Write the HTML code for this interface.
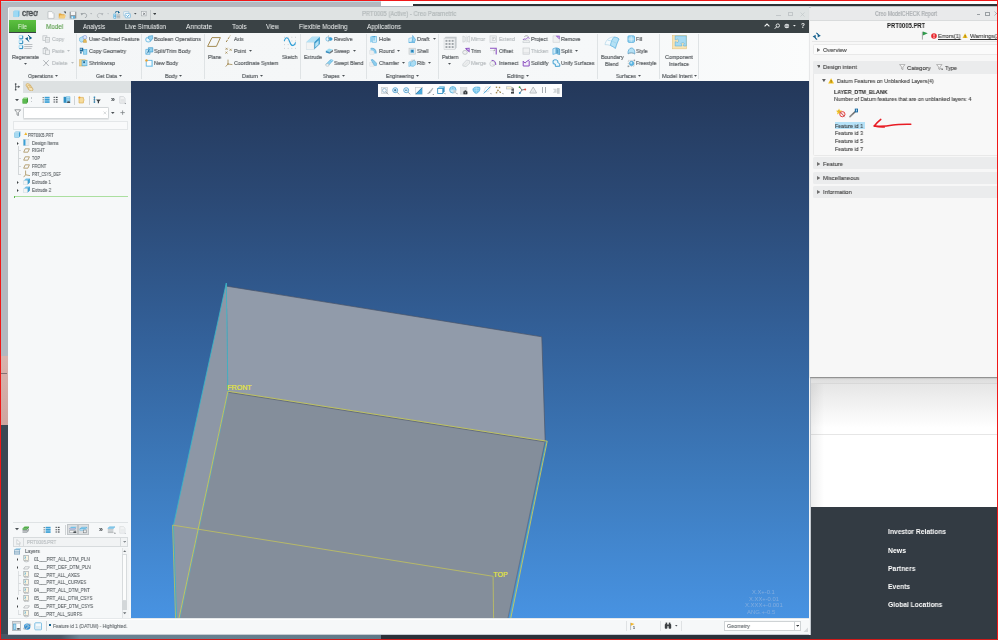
<!DOCTYPE html>
<html><head><meta charset="utf-8"><title>Creo Parametric</title>
<style>
html,body{margin:0;padding:0;}
body{width:998px;height:640px;overflow:hidden;position:relative;background:#b3b8bf;font-family:"Liberation Sans",sans-serif;}
#root{position:absolute;left:0;top:0;width:998px;height:640px;overflow:hidden;}
#root div,#root span,#root svg{position:absolute;white-space:nowrap;}
#root span{display:block;will-change:transform;}
</style></head><body><div id="root">
<div style="left:0px;top:0px;width:998px;height:640px;background:#b3b8bf;"></div>
<div style="left:1px;top:356px;width:8px;height:70px;background:linear-gradient(#d8b3ad,#cfa59f);"></div>
<div style="left:1px;top:425px;width:8px;height:215px;background:#3b4853;"></div>
<div style="left:0px;top:634px;width:811px;height:5px;background:#2a313a;"></div>
<div style="left:0px;top:634px;width:381px;height:5px;background:linear-gradient(90deg,#485664 0%,#4a5866 16%,#6a8292 21%,#66808f 60%,#5f7887 100%);"></div>
<div style="left:1.2px;top:1px;width:380px;height:0.6px;background:#bcdde8;"></div>
<div style="left:1.4px;top:372.9px;width:5.2px;height:1.1px;background:rgba(70,60,70,.55);"></div>
<div style="left:381px;top:1px;width:617px;height:3px;background:#ffffff;"></div>
<div style="left:381px;top:1px;width:32px;height:5px;background:#ffffff;"></div>
<div style="left:413px;top:4px;width:585px;height:2px;background:#2c3336;"></div>
<div style="left:413px;top:6px;width:585px;height:1px;background:#c9cdd0;"></div>
<div style="left:810px;top:377px;width:188px;height:130px;background:#ffffff;"></div>
<div style="left:810px;top:377px;width:188px;height:7px;background:linear-gradient(#c4c4c4,#dedede 25%,#e2e2e2 85%,#cfcfcf);"></div>
<div style="left:810px;top:384px;width:188px;height:44px;background:linear-gradient(#e6e6e6,#ffffff);"></div>
<div style="left:810px;top:434px;width:188px;height:0.8px;background:#e6e6e6;"></div>
<div style="left:810px;top:384px;width:14px;height:123px;background:linear-gradient(90deg,rgba(0,0,0,.07),rgba(0,0,0,0));"></div>
<div style="left:810px;top:507px;width:188px;height:133px;background:#333b43;"></div>
<span style="left:888.40px;top:527.30px;font-size:6.9px;line-height:9px;color:#ffffff;transform:scaleX(0.9713);transform-origin:0 50%;font-weight:bold;">Investor Relations</span>
<span style="left:888.40px;top:545.50px;font-size:6.9px;line-height:9px;color:#ffffff;transform:scaleX(0.9764);transform-origin:0 50%;font-weight:bold;">News</span>
<span style="left:888.40px;top:563.70px;font-size:6.9px;line-height:9px;color:#ffffff;transform:scaleX(0.9786);transform-origin:0 50%;font-weight:bold;">Partners</span>
<span style="left:888.40px;top:581.90px;font-size:6.9px;line-height:9px;color:#ffffff;transform:scaleX(0.9767);transform-origin:0 50%;font-weight:bold;">Events</span>
<span style="left:888.40px;top:600.10px;font-size:6.9px;line-height:9px;color:#ffffff;transform:scaleX(0.9719);transform-origin:0 50%;font-weight:bold;">Global Locations</span>
<div style="left:7.6px;top:6.8px;width:803px;height:627.9px;background:#c6cbd2;"></div>
<div style="left:8.4px;top:7.6px;width:801.8px;height:626.6px;background:#f5f7f8;"></div>
<div style="left:9px;top:7px;width:800px;height:13px;background:#dfe3e3;"></div>
<div style="left:9px;top:20.1px;width:800px;height:12.5px;background:#3a4245;"></div>
<div style="left:9px;top:20.1px;width:27px;height:12.4px;background:linear-gradient(#5cc040,#43a52f);"></div>
<div style="left:36px;top:20.1px;width:37.5px;height:13px;background:#f5f7f8;"></div>
<span style="left:18.00px;top:21.80px;font-size:6.8px;line-height:9px;color:#eaf7e4;transform:scaleX(0.8031);transform-origin:0 50%;">File</span>
<span style="left:45.80px;top:21.80px;font-size:6.8px;line-height:9px;color:#559a45;transform:scaleX(0.9287);transform-origin:0 50%;-webkit-text-stroke:0.1px;">Model</span>
<span style="left:83.00px;top:21.80px;font-size:6.8px;line-height:9px;color:#f2f4f4;transform:scaleX(0.8688);transform-origin:0 50%;">Analysis</span>
<span style="left:125.00px;top:21.80px;font-size:6.8px;line-height:9px;color:#f2f4f4;transform:scaleX(0.8891);transform-origin:0 50%;">Live Simulation</span>
<span style="left:186.00px;top:21.80px;font-size:6.8px;line-height:9px;color:#f2f4f4;transform:scaleX(0.9550);transform-origin:0 50%;">Annotate</span>
<span style="left:232.00px;top:21.80px;font-size:6.8px;line-height:9px;color:#f2f4f4;transform:scaleX(0.9134);transform-origin:0 50%;">Tools</span>
<span style="left:266.00px;top:21.80px;font-size:6.8px;line-height:9px;color:#f2f4f4;transform:scaleX(0.8894);transform-origin:0 50%;">View</span>
<span style="left:299.00px;top:21.80px;font-size:6.8px;line-height:9px;color:#f2f4f4;transform:scaleX(0.9165);transform-origin:0 50%;">Flexible Modeling</span>
<span style="left:367.00px;top:21.80px;font-size:6.8px;line-height:9px;color:#f2f4f4;transform:scaleX(0.9273);transform-origin:0 50%;">Applications</span>
<span style="left:361.50px;top:9.80px;font-size:6.4px;line-height:8px;color:#b4babb;transform:scaleX(0.9204);transform-origin:0 50%;-webkit-text-stroke:0.22px;">PRT0005 (Active) - Creo Parametric</span>
<div style="left:9px;top:33px;width:800px;height:48px;background:linear-gradient(90deg,#f4f6f7 0%,#f6f8f9 75%,#fbfcfc 100%);"></div>
<div style="left:75.5px;top:34px;width:1px;height:45px;background:#dfe3e5;"></div>
<div style="left:141.0px;top:34px;width:1px;height:45px;background:#dfe3e5;"></div>
<div style="left:203.8px;top:34px;width:1px;height:45px;background:#dfe3e5;"></div>
<div style="left:300.0px;top:34px;width:1px;height:45px;background:#dfe3e5;"></div>
<div style="left:365.8px;top:34px;width:1px;height:45px;background:#dfe3e5;"></div>
<div style="left:438.0px;top:34px;width:1px;height:45px;background:#dfe3e5;"></div>
<div style="left:596.9px;top:34px;width:1px;height:45px;background:#dfe3e5;"></div>
<div style="left:658.8px;top:34px;width:1px;height:45px;background:#dfe3e5;"></div>
<div style="left:698.0px;top:34px;width:1px;height:45px;background:#dfe3e5;"></div>
<div style="left:131px;top:81px;width:678px;height:538px;background:linear-gradient(#24385a 0%,#2b4975 22%,#33619a 48%,#3d7bbd 74%,#4893e2 100%);"></div>
<div style="left:9px;top:81px;width:122px;height:538px;background:#f6f8f9;"></div>
<div style="left:9px;top:81px;width:122px;height:11.5px;background:#dde1e2;"></div>
<div style="left:9px;top:81px;width:14px;height:12px;background:#f6f8f9;"></div>
<div style="left:9px;top:619px;width:800px;height:15.4px;background:#f6f8f9;"></div>
<div style="left:9px;top:618.6px;width:800px;height:0.8px;background:#ffffff;"></div>
<div style="left:808.8px;top:81px;width:1.5px;height:553.6px;background:#f4f6f7;"></div>
<div style="left:810.2px;top:377px;width:0.5px;height:257.6px;background:#c3c8ce;"></div>
<div style="left:810px;top:7px;width:191px;height:370px;background:#f7f7f7;box-shadow:0 0.5px 1.5px rgba(0,0,0,.35), -0.6px 0 0 rgba(255,255,255,.55);border-radius:2.5px 0 0 0;"></div>
<div style="left:810px;top:7px;width:191px;height:12.6px;background:#e9eaeb;border-radius:2.5px 0 0 0;border-bottom:0.6px solid #d9dbdc;"></div>
<div style="left:0px;top:0px;width:998px;height:1px;background:#f01818;"></div>
<div style="left:0px;top:0px;width:1px;height:640px;background:#f01818;"></div>
<div style="left:997px;top:0px;width:1px;height:640px;background:#f01818;"></div>
<div style="left:0px;top:639px;width:998px;height:1px;background:#c81c1c;"></div>
<svg style="left:131px;top:81px" width="678" height="538" viewBox="0 0 678 538"><polygon points="95.8,205.2 410.8,255.8 414.2,359.8 96.9,310.2" fill="#919baa"/><polygon points="95.3,202.0 95.8,205.2 96.9,310.2 47.8,538.0 45.6,538.0 42.4,444.4" fill="#8d97a6"/><polygon points="96.9,310.2 414.2,359.8 376.8,538.0 47.8,538.0" fill="#848e9b"/><polyline points="95.8,205.2 410.8,255.8 414.2,359.8" fill="none" stroke="#4a5568" stroke-width="0.7"/><polyline points="96.9,311.2 413.7,360.8" fill="none" stroke="#5d6675" stroke-width="0.8"/><polyline points="414.2,359.8 376.8,538.0" fill="none" stroke="#5d6675" stroke-width="0.6"/><polyline points="45.6,538.0 42.4,444.4 95.3,202.0 96.9,310.2" fill="none" stroke="#35b9c9" stroke-width="0.8"/><polyline points="415.3,360.4 378.7,538.0" fill="none" stroke="#4fb4c8" stroke-width="0.8"/><polyline points="97.6,310.2 48.7,538.0" fill="none" stroke="#4fb4c8" stroke-width="0.6"/><polyline points="47.8,538.0 96.9,310.2 416.2,360.2 379.6,538.0" fill="none" stroke="#c9c95a" stroke-width="0.9"/><polyline points="44.6,538.0 41.6,444.1 362.1,495.3 362.6,538.0" fill="none" stroke="#c3c35c" stroke-width="0.8"/><text x="96.19999999999999" y="308.7" font-size="7.1" fill="#e6e63a" stroke="#e6e63a" stroke-width="0.2" font-family="Liberation Sans, sans-serif">FRONT</text><text x="362.3" y="496.1" font-size="7" fill="#e6e63a" stroke="#e6e63a" stroke-width="0.2" font-family="Liberation Sans, sans-serif">TOP</text></svg>
<span style="left:752.10px;top:589.30px;font-size:5.7px;line-height:7px;color:#82addf;transform:scaleX(1.0207);transform-origin:0 50%;">X.X+-0.1</span>
<span style="left:748.80px;top:596.10px;font-size:5.7px;line-height:7px;color:#82addf;transform:scaleX(1.0235);transform-origin:0 50%;">X.XX+-0.01</span>
<span style="left:744.90px;top:602.40px;font-size:5.7px;line-height:7px;color:#82addf;transform:scaleX(1.0418);transform-origin:0 50%;">X.XXX+-0.001</span>
<span style="left:746.90px;top:609.00px;font-size:5.7px;line-height:7px;color:#82addf;transform:scaleX(1.0485);transform-origin:0 50%;">ANG.+-0.5</span>
<span style="left:12.00px;top:53.90px;font-size:5.8px;line-height:7px;color:#54595d;transform:scaleX(0.8907);transform-origin:0 50%;-webkit-text-stroke:0.16px;">Regenerate</span>
<svg style="left:24.00px;top:62.95px" width="3.0" height="1.9" viewBox="0 0 3.0 1.9"><polygon points="0,0 3.0,0 1.5,1.7" fill="#4b5155"/></svg>
<span style="left:52.00px;top:35.50px;font-size:5.8px;line-height:7px;color:#b7bcbf;transform:scaleX(0.8862);transform-origin:0 50%;-webkit-text-stroke:0.16px;">Copy</span>
<span style="left:52.00px;top:47.70px;font-size:5.8px;line-height:7px;color:#b7bcbf;transform:scaleX(0.8428);transform-origin:0 50%;-webkit-text-stroke:0.16px;">Paste</span>
<svg style="left:67.00px;top:50.15px" width="3.0" height="1.9" viewBox="0 0 3.0 1.9"><polygon points="0,0 3.0,0 1.5,1.7" fill="#b7bcbf"/></svg>
<span style="left:52.00px;top:59.90px;font-size:5.8px;line-height:7px;color:#b7bcbf;transform:scaleX(0.9245);transform-origin:0 50%;-webkit-text-stroke:0.16px;">Delete</span>
<svg style="left:70.50px;top:62.35px" width="3.0" height="1.9" viewBox="0 0 3.0 1.9"><polygon points="0,0 3.0,0 1.5,1.7" fill="#b7bcbf"/></svg>
<span style="left:27.50px;top:72.80px;font-size:5.8px;line-height:7px;color:#54595d;transform:scaleX(0.8812);transform-origin:0 50%;-webkit-text-stroke:0.16px;">Operations</span>
<svg style="left:55.00px;top:75.25px" width="3.0" height="1.9" viewBox="0 0 3.0 1.9"><polygon points="0,0 3.0,0 1.5,1.7" fill="#4b5155"/></svg>
<span style="left:88.50px;top:35.50px;font-size:5.8px;line-height:7px;color:#54595d;transform:scaleX(0.9055);transform-origin:0 50%;-webkit-text-stroke:0.16px;">User-Defined Feature</span>
<span style="left:88.50px;top:47.70px;font-size:5.8px;line-height:7px;color:#54595d;transform:scaleX(0.9110);transform-origin:0 50%;-webkit-text-stroke:0.16px;">Copy Geometry</span>
<span style="left:88.50px;top:59.90px;font-size:5.8px;line-height:7px;color:#54595d;transform:scaleX(0.8962);transform-origin:0 50%;-webkit-text-stroke:0.16px;">Shrinkwrap</span>
<span style="left:96.00px;top:72.80px;font-size:5.8px;line-height:7px;color:#54595d;transform:scaleX(0.9047);transform-origin:0 50%;-webkit-text-stroke:0.16px;">Get Data</span>
<svg style="left:119.00px;top:75.25px" width="3.0" height="1.9" viewBox="0 0 3.0 1.9"><polygon points="0,0 3.0,0 1.5,1.7" fill="#4b5155"/></svg>
<span style="left:154.00px;top:35.50px;font-size:5.8px;line-height:7px;color:#54595d;transform:scaleX(0.9167);transform-origin:0 50%;-webkit-text-stroke:0.16px;">Boolean Operations</span>
<span style="left:154.00px;top:47.70px;font-size:5.8px;line-height:7px;color:#54595d;transform:scaleX(0.9334);transform-origin:0 50%;-webkit-text-stroke:0.16px;">Split/Trim Body</span>
<span style="left:154.00px;top:59.90px;font-size:5.8px;line-height:7px;color:#54595d;transform:scaleX(0.9079);transform-origin:0 50%;-webkit-text-stroke:0.16px;">New Body</span>
<span style="left:164.50px;top:72.80px;font-size:5.8px;line-height:7px;color:#54595d;transform:scaleX(0.9455);transform-origin:0 50%;-webkit-text-stroke:0.16px;">Body</span>
<svg style="left:178.50px;top:75.25px" width="3.0" height="1.9" viewBox="0 0 3.0 1.9"><polygon points="0,0 3.0,0 1.5,1.7" fill="#4b5155"/></svg>
<span style="left:207.80px;top:53.90px;font-size:5.8px;line-height:7px;color:#54595d;transform:scaleX(0.8898);transform-origin:0 50%;-webkit-text-stroke:0.16px;">Plane</span>
<span style="left:234.00px;top:35.50px;font-size:5.8px;line-height:7px;color:#54595d;transform:scaleX(0.8670);transform-origin:0 50%;-webkit-text-stroke:0.16px;">Axis</span>
<span style="left:234.00px;top:47.70px;font-size:5.8px;line-height:7px;color:#54595d;transform:scaleX(0.9077);transform-origin:0 50%;-webkit-text-stroke:0.16px;">Point</span>
<svg style="left:249.00px;top:50.15px" width="3.0" height="1.9" viewBox="0 0 3.0 1.9"><polygon points="0,0 3.0,0 1.5,1.7" fill="#4b5155"/></svg>
<span style="left:234.00px;top:59.90px;font-size:5.8px;line-height:7px;color:#54595d;transform:scaleX(0.9022);transform-origin:0 50%;-webkit-text-stroke:0.16px;">Coordinate System</span>
<span style="left:282.00px;top:53.90px;font-size:5.8px;line-height:7px;color:#54595d;transform:scaleX(0.8741);transform-origin:0 50%;-webkit-text-stroke:0.16px;">Sketch</span>
<span style="left:242.00px;top:72.80px;font-size:5.8px;line-height:7px;color:#54595d;transform:scaleX(0.9366);transform-origin:0 50%;-webkit-text-stroke:0.16px;">Datum</span>
<svg style="left:259.80px;top:75.25px" width="3.0" height="1.9" viewBox="0 0 3.0 1.9"><polygon points="0,0 3.0,0 1.5,1.7" fill="#4b5155"/></svg>
<span style="left:303.50px;top:53.90px;font-size:5.8px;line-height:7px;color:#54595d;transform:scaleX(0.9005);transform-origin:0 50%;-webkit-text-stroke:0.16px;">Extrude</span>
<span style="left:334.00px;top:35.50px;font-size:5.8px;line-height:7px;color:#54595d;transform:scaleX(0.8829);transform-origin:0 50%;-webkit-text-stroke:0.16px;">Revolve</span>
<span style="left:334.00px;top:47.70px;font-size:5.8px;line-height:7px;color:#54595d;transform:scaleX(0.8740);transform-origin:0 50%;-webkit-text-stroke:0.16px;">Sweep</span>
<svg style="left:352.80px;top:50.15px" width="3.0" height="1.9" viewBox="0 0 3.0 1.9"><polygon points="0,0 3.0,0 1.5,1.7" fill="#4b5155"/></svg>
<span style="left:334.00px;top:59.90px;font-size:5.8px;line-height:7px;color:#54595d;transform:scaleX(0.9058);transform-origin:0 50%;-webkit-text-stroke:0.16px;">Swept Blend</span>
<span style="left:323.00px;top:72.80px;font-size:5.8px;line-height:7px;color:#54595d;transform:scaleX(0.8388);transform-origin:0 50%;-webkit-text-stroke:0.16px;">Shapes</span>
<svg style="left:341.50px;top:75.25px" width="3.0" height="1.9" viewBox="0 0 3.0 1.9"><polygon points="0,0 3.0,0 1.5,1.7" fill="#4b5155"/></svg>
<span style="left:378.50px;top:35.50px;font-size:5.8px;line-height:7px;color:#54595d;transform:scaleX(0.9640);transform-origin:0 50%;-webkit-text-stroke:0.16px;">Hole</span>
<span style="left:378.50px;top:47.70px;font-size:5.8px;line-height:7px;color:#54595d;transform:scaleX(0.9069);transform-origin:0 50%;-webkit-text-stroke:0.16px;">Round</span>
<svg style="left:397.00px;top:50.15px" width="3.0" height="1.9" viewBox="0 0 3.0 1.9"><polygon points="0,0 3.0,0 1.5,1.7" fill="#4b5155"/></svg>
<span style="left:378.50px;top:59.90px;font-size:5.8px;line-height:7px;color:#54595d;transform:scaleX(0.8993);transform-origin:0 50%;-webkit-text-stroke:0.16px;">Chamfer</span>
<svg style="left:401.50px;top:62.35px" width="3.0" height="1.9" viewBox="0 0 3.0 1.9"><polygon points="0,0 3.0,0 1.5,1.7" fill="#4b5155"/></svg>
<span style="left:417.00px;top:35.50px;font-size:5.8px;line-height:7px;color:#54595d;transform:scaleX(0.9945);transform-origin:0 50%;-webkit-text-stroke:0.16px;">Draft</span>
<svg style="left:432.50px;top:37.95px" width="3.0" height="1.9" viewBox="0 0 3.0 1.9"><polygon points="0,0 3.0,0 1.5,1.7" fill="#4b5155"/></svg>
<span style="left:417.00px;top:47.70px;font-size:5.8px;line-height:7px;color:#54595d;transform:scaleX(0.8916);transform-origin:0 50%;-webkit-text-stroke:0.16px;">Shell</span>
<span style="left:417.00px;top:59.90px;font-size:5.8px;line-height:7px;color:#54595d;transform:scaleX(0.9192);transform-origin:0 50%;-webkit-text-stroke:0.16px;">Rib</span>
<svg style="left:428.10px;top:62.35px" width="3.0" height="1.9" viewBox="0 0 3.0 1.9"><polygon points="0,0 3.0,0 1.5,1.7" fill="#4b5155"/></svg>
<span style="left:386.00px;top:72.80px;font-size:5.8px;line-height:7px;color:#54595d;transform:scaleX(0.9044);transform-origin:0 50%;-webkit-text-stroke:0.16px;">Engineering</span>
<svg style="left:416.00px;top:75.25px" width="3.0" height="1.9" viewBox="0 0 3.0 1.9"><polygon points="0,0 3.0,0 1.5,1.7" fill="#4b5155"/></svg>
<span style="left:441.50px;top:53.90px;font-size:5.8px;line-height:7px;color:#54595d;transform:scaleX(0.8823);transform-origin:0 50%;-webkit-text-stroke:0.16px;">Pattern</span>
<svg style="left:448.10px;top:62.95px" width="3.0" height="1.9" viewBox="0 0 3.0 1.9"><polygon points="0,0 3.0,0 1.5,1.7" fill="#4b5155"/></svg>
<span style="left:470.80px;top:35.50px;font-size:5.8px;line-height:7px;color:#b7bcbf;transform:scaleX(0.9378);transform-origin:0 50%;-webkit-text-stroke:0.16px;">Mirror</span>
<span style="left:471.00px;top:47.70px;font-size:5.8px;line-height:7px;color:#54595d;transform:scaleX(0.8788);transform-origin:0 50%;-webkit-text-stroke:0.16px;">Trim</span>
<span style="left:471.00px;top:59.90px;font-size:5.8px;line-height:7px;color:#b7bcbf;transform:scaleX(0.9124);transform-origin:0 50%;-webkit-text-stroke:0.16px;">Merge</span>
<span style="left:498.50px;top:35.50px;font-size:5.8px;line-height:7px;color:#b7bcbf;transform:scaleX(0.8861);transform-origin:0 50%;-webkit-text-stroke:0.16px;">Extend</span>
<span style="left:498.50px;top:47.70px;font-size:5.8px;line-height:7px;color:#54595d;transform:scaleX(0.9111);transform-origin:0 50%;-webkit-text-stroke:0.16px;">Offset</span>
<span style="left:498.50px;top:59.90px;font-size:5.8px;line-height:7px;color:#54595d;transform:scaleX(0.8767);transform-origin:0 50%;-webkit-text-stroke:0.16px;">Intersect</span>
<span style="left:531.00px;top:35.50px;font-size:5.8px;line-height:7px;color:#54595d;transform:scaleX(0.9140);transform-origin:0 50%;-webkit-text-stroke:0.16px;">Project</span>
<span style="left:531.00px;top:47.70px;font-size:5.8px;line-height:7px;color:#b7bcbf;transform:scaleX(0.8617);transform-origin:0 50%;-webkit-text-stroke:0.16px;">Thicken</span>
<span style="left:531.00px;top:59.90px;font-size:5.8px;line-height:7px;color:#54595d;transform:scaleX(0.9359);transform-origin:0 50%;-webkit-text-stroke:0.16px;">Solidify</span>
<span style="left:561.00px;top:35.50px;font-size:5.8px;line-height:7px;color:#54595d;transform:scaleX(0.9029);transform-origin:0 50%;-webkit-text-stroke:0.16px;">Remove</span>
<span style="left:561.00px;top:47.70px;font-size:5.8px;line-height:7px;color:#54595d;transform:scaleX(0.9749);transform-origin:0 50%;-webkit-text-stroke:0.16px;">Split</span>
<svg style="left:575.00px;top:50.15px" width="3.0" height="1.9" viewBox="0 0 3.0 1.9"><polygon points="0,0 3.0,0 1.5,1.7" fill="#4b5155"/></svg>
<span style="left:561.00px;top:59.90px;font-size:5.8px;line-height:7px;color:#54595d;transform:scaleX(0.8882);transform-origin:0 50%;-webkit-text-stroke:0.16px;">Unify Surfaces</span>
<span style="left:507.00px;top:72.80px;font-size:5.8px;line-height:7px;color:#54595d;transform:scaleX(0.9586);transform-origin:0 50%;-webkit-text-stroke:0.16px;">Editing</span>
<svg style="left:525.80px;top:75.25px" width="3.0" height="1.9" viewBox="0 0 3.0 1.9"><polygon points="0,0 3.0,0 1.5,1.7" fill="#4b5155"/></svg>
<span style="left:600.50px;top:53.90px;font-size:5.8px;line-height:7px;color:#54595d;transform:scaleX(0.9062);transform-origin:0 50%;-webkit-text-stroke:0.16px;">Boundary</span>
<span style="left:605.00px;top:60.90px;font-size:5.8px;line-height:7px;color:#54595d;transform:scaleX(0.9100);transform-origin:0 50%;-webkit-text-stroke:0.16px;">Blend</span>
<span style="left:635.50px;top:35.50px;font-size:5.8px;line-height:7px;color:#54595d;transform:scaleX(0.8773);transform-origin:0 50%;-webkit-text-stroke:0.16px;">Fill</span>
<span style="left:635.50px;top:47.70px;font-size:5.8px;line-height:7px;color:#54595d;transform:scaleX(0.8918);transform-origin:0 50%;-webkit-text-stroke:0.16px;">Style</span>
<span style="left:635.50px;top:59.90px;font-size:5.8px;line-height:7px;color:#54595d;transform:scaleX(0.8595);transform-origin:0 50%;-webkit-text-stroke:0.16px;">Freestyle</span>
<span style="left:616.00px;top:72.80px;font-size:5.8px;line-height:7px;color:#54595d;transform:scaleX(0.8738);transform-origin:0 50%;-webkit-text-stroke:0.16px;">Surfaces</span>
<svg style="left:637.80px;top:75.25px" width="3.0" height="1.9" viewBox="0 0 3.0 1.9"><polygon points="0,0 3.0,0 1.5,1.7" fill="#4b5155"/></svg>
<span style="left:665.00px;top:53.90px;font-size:5.8px;line-height:7px;color:#54595d;transform:scaleX(0.9338);transform-origin:0 50%;-webkit-text-stroke:0.16px;">Component</span>
<span style="left:669.00px;top:60.90px;font-size:5.8px;line-height:7px;color:#54595d;transform:scaleX(0.8862);transform-origin:0 50%;-webkit-text-stroke:0.16px;">Interface</span>
<span style="left:661.50px;top:72.80px;font-size:5.8px;line-height:7px;color:#54595d;transform:scaleX(0.9555);transform-origin:0 50%;-webkit-text-stroke:0.16px;">Model Intent</span>
<svg style="left:693.70px;top:75.25px" width="3.0" height="1.9" viewBox="0 0 3.0 1.9"><polygon points="0,0 3.0,0 1.5,1.7" fill="#4b5155"/></svg>
<svg style="left:18px;top:35px" width="16" height="15" viewBox="0 0 16 15"><rect x="1.1" y="0.4" width="3.6" height="3.4" rx="0.6" fill="#e4f5fc" stroke="#6cc0ea" stroke-width="0.5"/><path d="M4.7 0.8 V3.8 H1.4" fill="none" stroke="#2382b8" stroke-width="0.9"/><rect x="1.1" y="5.2" width="3.6" height="3.4" rx="0.6" fill="#e4f5fc" stroke="#6cc0ea" stroke-width="0.5"/><path d="M4.7 5.6000000000000005 V8.6 H1.4" fill="none" stroke="#2382b8" stroke-width="0.9"/><rect x="1.1" y="10.2" width="3.6" height="3.4" rx="0.6" fill="#e4f5fc" stroke="#6cc0ea" stroke-width="0.5"/><path d="M4.7 10.6 V13.6 H1.4" fill="none" stroke="#2382b8" stroke-width="0.9"/><polygon points="7,3.7 9.9,1.9 9.9,5.5" fill="#0f5f8d"/><path d="M9.3 4.6 Q10 6.1 11.2 6.5" fill="none" stroke="#0f5f8d" stroke-width="1"/><polygon points="14.2,2.9 11.3,1.1 11.3,4.7" fill="#0f5f8d"/><path d="M11.9 2 Q11.2 0.6 10 0.3" fill="none" stroke="#0f5f8d" stroke-width="1"/><g stroke="#b3b8bb" stroke-width="0.9"><line x1="6.2" y1="9.5" x2="14.4" y2="9.5"/><line x1="6.2" y1="11.5" x2="14.4" y2="11.5"/><line x1="6.2" y1="13.4" x2="13.6" y2="13.4"/></g></svg>
<svg style="left:42px;top:35px" width="9" height="8" viewBox="0 0 9 8"><g fill="#eef0f1" stroke="#b9bec1" stroke-width="0.7"><rect x="0.9" y="0.8" width="4" height="4.6"/><rect x="3.4" y="2.6" width="4.2" height="4.6"/></g><line x1="4.3" y1="4.4" x2="6.8" y2="4.4" stroke="#c4c8cb" stroke-width="0.5"/><line x1="4.3" y1="5.8" x2="6.8" y2="5.8" stroke="#c4c8cb" stroke-width="0.5"/></svg>
<svg style="left:42px;top:47px" width="9" height="8" viewBox="0 0 9 8"><g fill="#eef0f1" stroke="#b9bec1" stroke-width="0.7"><rect x="1.1" y="1.4" width="4.4" height="5.4"/><rect x="2.4" y="0.6" width="1.8" height="1.2"/><rect x="3.6" y="3" width="4" height="4.4"/></g></svg>
<svg style="left:42px;top:59px" width="9" height="8" viewBox="0 0 9 8"><g stroke="#9fa5a9" stroke-width="0.8"><line x1="1.3" y1="1.2" x2="6.8" y2="7"/><line x1="6.8" y1="1.2" x2="1.3" y2="7"/></g></svg>
<svg style="left:79px;top:35px" width="9" height="8" viewBox="0 0 9 8"><polygon points="0.6,3 4,1.4 5.6,2.6 5.6,6 2.2,7.2 0.6,6" fill="#b9e2f5" stroke="#4aa8da" stroke-width="0.5"/><circle cx="5.9" cy="2.3" r="1.9" fill="#dfe6f8" stroke="#6b86d0" stroke-width="0.5"/><path d="M4.2 7.4 L4.8 4.6 L7 4.6 L7.6 7.4 Z" fill="#e9bd5a" stroke="#b98a2a" stroke-width="0.4"/></svg>
<svg style="left:79px;top:47px" width="9" height="8" viewBox="0 0 9 8"><rect x="0.8" y="0.8" width="3.4" height="3.6" fill="#1d6a99"/><rect x="1.5" y="1.5" width="1.2" height="1.4" fill="#e9f6fc"/><rect x="4.3" y="2.6" width="3.6" height="4.6" fill="#9bd6f0" stroke="#3aa0d6" stroke-width="0.5"/><rect x="1.2" y="4.6" width="1.4" height="2" fill="#1d6a99"/></svg>
<svg style="left:79px;top:59px" width="9" height="8" viewBox="0 0 9 8"><rect x="0.7" y="0.8" width="6" height="6.2" fill="#f1d28a" stroke="#d0a54a" stroke-width="0.5"/><rect x="3" y="1.6" width="5" height="5.2" fill="#a6daf2" stroke="#3aa0d6" stroke-width="0.5"/><rect x="4.2" y="2.3" width="1.8" height="1.8" fill="#1d6a99"/></svg>
<svg style="left:144.5px;top:35px" width="9" height="8" viewBox="0 0 9 8"><ellipse cx="3.4" cy="4.6" rx="2.8" ry="2.5" fill="#c7e9f8" stroke="#4aa8da" stroke-width="0.6"/><polygon points="3.6,1.2 7.6,0.6 7.8,3.8 5.8,5.6 3.6,4" fill="#8fd0ee" stroke="#2e8fc4" stroke-width="0.5"/><ellipse cx="2.9" cy="5" rx="1.3" ry="1.1" fill="#f4fbfe"/></svg>
<svg style="left:144.5px;top:47px" width="9" height="8" viewBox="0 0 9 8"><polygon points="0.8,2.4 5,2.4 5,7.3 0.8,7.3" fill="#c7e9f8" stroke="#3aa0d6" stroke-width="0.6"/><polygon points="3.4,0.7 7.8,0.7 7.8,5 3.4,5" fill="#8fd0ee" stroke="#2e8fc4" stroke-width="0.6"/><path d="M2 6.4 C3.4 5.4 3 3.4 4.6 2.6" stroke="#16608e" stroke-width="0.8" fill="none"/></svg>
<svg style="left:144.5px;top:59px" width="9" height="8" viewBox="0 0 9 8"><rect x="1.2" y="1.3" width="5.8" height="5.8" fill="#fbfdfe" stroke="#55aede" stroke-width="0.8"/><polygon points="7,1.3 7.8,2 7.8,7.8 2,7.8 1.2,7.1 7,7.1" fill="#8fd0ee"/><circle cx="1.5" cy="1.4" r="1.2" fill="#f2a027"/></svg>
<svg style="left:206px;top:36px" width="16" height="12" viewBox="0 0 16 12"><polygon points="1.6,10.4 6,1.6 14.4,1.6 10.4,10.4" fill="none" stroke="#a38a52" stroke-width="1"/></svg>
<svg style="left:225px;top:35px" width="8" height="8" viewBox="0 0 8 8"><line x1="1.2" y1="7" x2="5.2" y2="0.6" stroke="#a38a52" stroke-width="1" stroke-dasharray="2.4 0.9"/></svg>
<svg style="left:225px;top:47px" width="8" height="8" viewBox="0 0 8 8"><g stroke="#a38a52" stroke-width="0.8"><path d="M0.6 0.8 L2.6 2.8 M2.6 0.8 L0.6 2.8 M4.6 1.8 L6.6 3.8 M6.6 1.8 L4.6 3.8 M0.4 4.6 L2.4 6.6 M2.4 4.6 L0.4 6.6"/></g></svg>
<svg style="left:224.5px;top:59px" width="9" height="8.5" viewBox="0 0 9 8.5"><path d="M3 0.6 V5 L0.7 7.6 M3 5 L7.4 5.6" stroke="#a38a52" stroke-width="0.8" fill="none"/><circle cx="3" cy="5" r="0.8" fill="#a38a52"/></svg>
<svg style="left:282.5px;top:35.5px" width="14" height="13.5" viewBox="0 0 14 13.5"><g fill="#c3c8cb"><rect x="1.0" y="0.8" width="0.9" height="0.9"/><rect x="1.0" y="4.5" width="0.9" height="0.9"/><rect x="1.0" y="8.2" width="0.9" height="0.9"/><rect x="1.0" y="11.9" width="0.9" height="0.9"/><rect x="4.7" y="0.8" width="0.9" height="0.9"/><rect x="4.7" y="4.5" width="0.9" height="0.9"/><rect x="4.7" y="8.2" width="0.9" height="0.9"/><rect x="4.7" y="11.9" width="0.9" height="0.9"/><rect x="8.4" y="0.8" width="0.9" height="0.9"/><rect x="8.4" y="4.5" width="0.9" height="0.9"/><rect x="8.4" y="8.2" width="0.9" height="0.9"/><rect x="8.4" y="11.9" width="0.9" height="0.9"/><rect x="12.1" y="0.8" width="0.9" height="0.9"/><rect x="12.1" y="4.5" width="0.9" height="0.9"/><rect x="12.1" y="8.2" width="0.9" height="0.9"/><rect x="12.1" y="11.9" width="0.9" height="0.9"/></g><path d="M1.2 5.2 C2.6 0.4 5 0.6 6.8 6 C8.4 10.6 11 10.8 12.6 6.4" stroke="#2f9fd8" stroke-width="1.1" fill="none"/></svg>
<svg style="left:304.5px;top:35.5px" width="16" height="14.5" viewBox="0 0 16 14.5"><polygon points="1.2,6.2 7,0.8 14.8,0.8 14.8,8 9,13.4 1.2,13.4" fill="#9bd6f0"/><polygon points="9,6.2 14.8,0.8 14.8,8 9,13.4" fill="#3d9ccc"/><polygon points="10.2,7.4 13.6,4.2 13.6,8.4 10.2,11.4" fill="#b7e3f6"/><rect x="1.2" y="6.2" width="7.8" height="7.2" fill="#f3f4f4" stroke="#dfe2e4" stroke-width="0.5"/><polygon points="1.2,6.2 7,0.8 14.8,0.8 9,6.2" fill="#b5e1f5"/></svg>
<svg style="left:324.5px;top:35px" width="9" height="8" viewBox="0 0 9 8"><ellipse cx="2.6" cy="4" rx="1.7" ry="2" fill="#e9f6fc" stroke="#4aa8da" stroke-width="0.6"/><path d="M4.2 2.2 H6.2 L7.8 4 L6.2 5.8 H4.2 Z" fill="#3aa0d6"/><line x1="3.6" y1="0.3" x2="3.6" y2="7.6" stroke="#7d8387" stroke-width="0.5" stroke-dasharray="1.6 0.8"/></svg>
<svg style="left:324.5px;top:47px" width="9" height="8" viewBox="0 0 9 8"><polygon points="0.8,3.8 4,1.4 8,2.8 4.8,5" fill="#9adcf3"/><polygon points="0.8,3.8 4.8,5 4.8,6.8 0.8,5.6" fill="#3a8fc0"/><polygon points="4.8,5 8,2.8 8,4.4 4.8,6.8" fill="#6f777c"/></svg>
<svg style="left:324.5px;top:59px" width="9" height="8" viewBox="0 0 9 8"><polygon points="0.8,5.4 5.4,0.8 7.8,1.6 3.4,6.6" fill="#8fd0ee" stroke="#3aa0d6" stroke-width="0.5"/><ellipse cx="2.4" cy="6" rx="1.7" ry="1.3" fill="#eef3f5" stroke="#a8aeb2" stroke-width="0.5"/><ellipse cx="6.8" cy="1.5" rx="1" ry="0.8" fill="#d4eefa" stroke="#3aa0d6" stroke-width="0.4"/></svg>
<svg style="left:369px;top:35px" width="9" height="8" viewBox="0 0 9 8"><polygon points="1,1.8 3.2,0.8 3.2,7 1,7.6" fill="#9ad4f0"/><rect x="3.2" y="1.4" width="4.4" height="5.8" fill="#d9f0fa" stroke="#55aede" stroke-width="0.6"/><ellipse cx="5.2" cy="2" rx="1.2" ry="0.7" fill="#2e8fc4"/><rect x="4.2" y="2" width="2" height="3.6" fill="#8fd0ee"/></svg>
<svg style="left:369px;top:47px" width="9" height="8" viewBox="0 0 9 8"><rect x="0.8" y="3.2" width="4.2" height="4.2" fill="#eceeef" stroke="#d3d7d9" stroke-width="0.4"/><path d="M1.6 1.4 C5 0.6 7.4 2.6 7.2 6.4 L5.2 6.4 C5.4 4 4 3 1.6 3.2 Z" fill="#8ccdee"/><path d="M1.6 1.4 C5 0.6 7.4 2.6 7.2 6.4" fill="none" stroke="#2e8fc4" stroke-width="0.5"/></svg>
<svg style="left:369px;top:59px" width="9" height="8" viewBox="0 0 9 8"><rect x="0.8" y="3.4" width="4.2" height="4" fill="#eceeef" stroke="#d3d7d9" stroke-width="0.4"/><polygon points="2,0.8 4,0.6 7.6,4.2 7.4,6.6 5.4,6.6" fill="#8ccdee" stroke="#2e8fc4" stroke-width="0.4"/></svg>
<svg style="left:407.5px;top:35px" width="9" height="8" viewBox="0 0 9 8"><polygon points="0.8,3.4 4.4,2.6 4.4,7 0.8,7.4" fill="#d9f0fa" stroke="#55aede" stroke-width="0.5"/><polygon points="4.6,0.5 7.6,4.6 6.4,7.2 4,6.8 4.8,3.2" fill="#9ad4f0" stroke="#3f9bd0" stroke-width="0.5"/><line x1="0.8" y1="7.5" x2="7" y2="7.5" stroke="#3aa0d6" stroke-width="0.6"/></svg>
<svg style="left:407.5px;top:47px" width="9" height="8" viewBox="0 0 9 8"><rect x="1" y="1.2" width="6.4" height="6" fill="#e3e7e9" stroke="#bfc5c8" stroke-width="0.6"/><rect x="2.6" y="2.6" width="3.4" height="3.2" fill="#55aede"/><rect x="3.4" y="3.3" width="1.6" height="1.4" fill="#1d6a99"/></svg>
<svg style="left:407.5px;top:59px" width="9" height="8" viewBox="0 0 9 8"><polygon points="0.8,3 2.6,2.2 2.6,7 0.8,7.6" fill="#b7e3f6" stroke="#55aede" stroke-width="0.4"/><polygon points="2.6,7 2.6,3.8 5.4,1.4 7.8,2.4 7.8,5.6 5.2,7.4" fill="#a9dcf3" stroke="#55aede" stroke-width="0.5"/><line x1="4" y1="0.6" x2="4" y2="3" stroke="#8a9094" stroke-width="0.5"/><line x1="6.2" y1="0.4" x2="6.2" y2="2" stroke="#8a9094" stroke-width="0.5"/></svg>
<svg style="left:442.5px;top:35.5px" width="15" height="14.5" viewBox="0 0 15 14.5"><polygon points="1,2.4 2.6,0.8 13.6,0.8 13.6,11.6 12,13.4 1,13.4" fill="#c3c8cb"/><rect x="1" y="2.4" width="11" height="11" fill="#f0f2f3" stroke="#cfd3d5" stroke-width="0.5"/><g fill="#9ea4a8"><rect x="2.5" y="3.9" width="1.9" height="1.9"/><rect x="2.5" y="7.0" width="1.9" height="1.9"/><rect x="2.5" y="10.1" width="1.9" height="1.9"/><rect x="5.6" y="3.9" width="1.9" height="1.9"/><rect x="5.6" y="7.0" width="1.9" height="1.9"/><rect x="5.6" y="10.1" width="1.9" height="1.9"/><rect x="8.7" y="3.9" width="1.9" height="1.9"/><rect x="8.7" y="7.0" width="1.9" height="1.9"/><rect x="8.7" y="10.1" width="1.9" height="1.9"/></g></svg>
<svg style="left:461.5px;top:35px" width="9" height="8" viewBox="0 0 9 8"><g fill="#eceeef" stroke="#c3c8cb" stroke-width="0.6"><polygon points="0.9,1 3.2,2 3.2,6.4 0.9,7.2"/><polygon points="7.6,1 5.3,2 5.3,6.4 7.6,7.2"/></g><line x1="4.25" y1="0.4" x2="4.25" y2="7.6" stroke="#c9cdd0" stroke-width="0.5"/></svg>
<svg style="left:461.5px;top:47px" width="9" height="8" viewBox="0 0 9 8"><ellipse cx="3" cy="5.4" rx="2.3" ry="2" fill="#f0f1f2" stroke="#a8aeb2" stroke-width="0.6"/><polygon points="3,1 7.6,0.8 7.6,5.4 6,4.2 4.2,2.8" fill="#8a4fc0"/><polygon points="4.6,1.8 6.8,1.7 6.8,3.8" fill="#d9c3f0"/></svg>
<svg style="left:461.5px;top:59px" width="9" height="8" viewBox="0 0 9 8"><polygon points="0.8,5 4.6,1 7.8,1.8 7.6,4.4 4,7.6 0.9,7" fill="#eceeef" stroke="#c3c8cb" stroke-width="0.6"/><line x1="2.2" y1="6.6" x2="5.8" y2="3" stroke="#d3d7d9" stroke-width="0.5"/></svg>
<svg style="left:489px;top:35px" width="9" height="8" viewBox="0 0 9 8"><rect x="1" y="0.9" width="6.6" height="6.4" fill="#eef0f1" stroke="#c3c8cb" stroke-width="0.6"/><rect x="3.2" y="2.8" width="3" height="2.6" fill="#fafbfb" stroke="#b3b9bd" stroke-width="0.5"/><polygon points="4,3.6 5.4,3.6 4.7,4.6" fill="#8a9094"/></svg>
<svg style="left:489px;top:47px" width="9" height="8" viewBox="0 0 9 8"><path d="M1 1.2 H7.2 V7.4" fill="none" stroke="#8a4fc0" stroke-width="1.1"/><path d="M1 3.6 H4.8 V7.4" fill="none" stroke="#d9dcde" stroke-width="0.7"/><polygon points="5.3,2.4 6.2,3.6 4.4,3.6" fill="#5b5f63"/></svg>
<svg style="left:489px;top:59px" width="9" height="8" viewBox="0 0 9 8"><ellipse cx="3.4" cy="4.8" rx="2.6" ry="2.5" fill="#f3f4f5" stroke="#b3b9bd" stroke-width="0.6"/><path d="M2.6 1.4 C5.2 1 7 3 6.8 6" fill="none" stroke="#8a4fc0" stroke-width="1"/><line x1="3.4" y1="4.8" x2="5" y2="6.6" stroke="#8a9094" stroke-width="0.4"/></svg>
<svg style="left:521.5px;top:35px" width="9" height="8" viewBox="0 0 9 8"><path d="M0.9 6.6 C1.6 5 3.4 4.8 4.4 5.6 C5.6 4.4 7 5 7.6 6.2 L7.6 7.6 L0.9 7.6 Z" fill="#eef0f1" stroke="#b3b9bd" stroke-width="0.5"/><path d="M1 5 C2 2.6 3.4 5.2 4.6 3.6 C5.6 2.2 6.6 2.6 7.6 3.4" fill="none" stroke="#8a4fc0" stroke-width="0.9"/><path d="M2.4 1.6 C3.6 0.4 5.4 0.6 6.6 1.6" fill="none" stroke="#5b5f63" stroke-width="0.5"/></svg>
<svg style="left:521.5px;top:47px" width="9" height="8" viewBox="0 0 9 8"><rect x="1" y="1" width="6.6" height="6.2" fill="#f0f1f2" stroke="#c9cdd0" stroke-width="0.7"/><line x1="1" y1="5.8" x2="7.6" y2="5.8" stroke="#d0d4d6" stroke-width="0.6"/></svg>
<svg style="left:521.5px;top:59px" width="9" height="8" viewBox="0 0 9 8"><path d="M1.2 2 V7 H7.2 V2" fill="#f3eefa" stroke="#8a4fc0" stroke-width="1"/><path d="M1.2 2.4 L3.2 4 L4.4 2.6 L7.4 0.8" fill="none" stroke="#8a4fc0" stroke-width="1"/></svg>
<svg style="left:551.5px;top:35px" width="9" height="8" viewBox="0 0 9 8"><polygon points="1,0.8 7.6,0.8 7.6,7.4 1,7.4" fill="#eef0f1" stroke="#cdd1d3" stroke-width="0.6"/><polygon points="3.6,0.8 7.6,0.8 7.6,4.6" fill="#8a4fc0"/><polygon points="5,1.4 7,1.4 7,3.4" fill="#c9a8ea"/></svg>
<svg style="left:551.5px;top:47px" width="9" height="8" viewBox="0 0 9 8"><polygon points="0.9,1.8 3.8,0.8 3.8,6.6 0.9,7.4" fill="#cfeaf7" stroke="#3aa0d6" stroke-width="0.6"/><polygon points="4.6,0.8 7.6,2 7.6,7.6 4.6,6.6" fill="#8fd0ee" stroke="#1d7fb8" stroke-width="0.6"/><line x1="5.8" y1="2.4" x2="5.8" y2="6" stroke="#16608e" stroke-width="0.6"/></svg>
<svg style="left:551.5px;top:59px" width="9" height="8" viewBox="0 0 9 8"><path d="M1 1.6 C2.6 0.4 4.6 0.6 5.8 1.8 L5.8 3.6 C7 3.8 8 5 7.8 7.2 L3.4 7.4 L3.2 5 L1.2 4.8 Z" fill="#eaf6fc" stroke="#2e95cc" stroke-width="0.9"/></svg>
<svg style="left:603.5px;top:35.5px" width="16" height="13.5" viewBox="0 0 16 13.5"><path d="M1 8.6 C1.6 4.6 4.6 1.6 9 1 C11.2 1 13.4 1.6 15 3 C13.6 5.6 12.4 8.8 11.4 12.4 C8.8 10 4.6 8.4 1 8.6 Z" fill="#f4fafd" stroke="#a8cfe4" stroke-width="0.6"/><path d="M6.4 9.4 C7 5.6 8.2 2.8 10.2 1.1 C12 1.2 13.8 1.8 15 3 C13.6 5.6 12.4 8.8 11.4 12.4 C10 11.2 8.4 10.2 6.4 9.4 Z" fill="#b5e1f5" stroke="#4aa8da" stroke-width="0.6"/><path d="M3.6 4.2 C7 4.6 10.4 6 13 7.6" fill="none" stroke="#8fc8e6" stroke-width="0.5"/></svg>
<svg style="left:626.5px;top:35px" width="9" height="8" viewBox="0 0 9 8"><rect x="1" y="0.9" width="6.4" height="6.4" rx="0.8" fill="#a6daf2" stroke="#3aa0d6" stroke-width="0.8"/><line x1="4.2" y1="1" x2="4.2" y2="7.2" stroke="#e9f6fc" stroke-width="0.6"/><line x1="1.2" y1="4.1" x2="7.2" y2="4.1" stroke="#e9f6fc" stroke-width="0.6"/></svg>
<svg style="left:626.5px;top:47px" width="9" height="8" viewBox="0 0 9 8"><path d="M1 6.8 C0.8 3.4 2.2 1.2 4.4 1 C6.8 1 8 3.4 7.8 7 C6 5.4 3 5.4 1 6.8 Z" fill="#b5e1f5" stroke="#4a9fd0" stroke-width="0.7"/><path d="M1.2 6.8 C3 5.6 6 5.6 7.6 7" fill="none" stroke="#9aa0a4" stroke-width="0.6"/></svg>
<svg style="left:626.5px;top:59px" width="9" height="8.5" viewBox="0 0 9 8.5"><rect x="1.3" y="1.4" width="6" height="5.8" fill="none" stroke="#9aa0a4" stroke-width="0.5" stroke-dasharray="1.2 0.8"/><circle cx="4.6" cy="4.4" r="2.2" fill="#5fb9e6" stroke="#2e8fc4" stroke-width="0.5"/><circle cx="4.2" cy="3.8" r="0.9" fill="#d4eefa"/><rect x="0.6" y="6.8" width="1.3" height="1.3" fill="#8a9094"/><rect x="6.8" y="0.6" width="1.3" height="1.3" fill="#8a9094"/></svg>
<svg style="left:671.5px;top:35px" width="15.5" height="14.5" viewBox="0 0 15.5 14.5"><rect x="0.6" y="0.6" width="14" height="13.2" fill="#f7e3b4" stroke="#e4c47c" stroke-width="0.6"/><path d="M3.2 0.9 H14.3 V11 H11.6 V9.6 C12.6 9.4 12.6 7.8 11.4 7.8 H10 C8.8 7.8 8.8 9.4 9.8 9.6 V11 H3.2 V6.8 H4.4 C4.8 7.8 6.4 7.8 6.4 6.4 V5.2 C6.4 3.8 4.8 3.8 4.4 4.8 H3.2 Z" fill="#a6daf2" stroke="#4aa8da" stroke-width="0.5"/></svg>
<svg style="left:12.5px;top:10.4px" width="7" height="7.6" viewBox="0 0 7 7.6"><polygon points="0.6,1.6 1.6,0.5 6.4,0.5 6.4,6 5.4,7.1 0.6,7.1" fill="#5db7e4"/><rect x="0.6" y="1.6" width="4.8" height="5.5" fill="#9bd9f4"/><polygon points="0.6,1.6 1.6,0.5 6.4,0.5 5.4,1.6" fill="#c4eafa"/></svg>
<span style="left:21.50px;top:8.40px;font-size:8.8px;line-height:11px;color:#454a4d;transform:scaleX(0.9112);transform-origin:0 50%;-webkit-text-stroke:0.45px;">creo</span>
<span style="left:37.20px;top:9.60px;font-size:5px;line-height:6px;color:#454a4d;font-weight:bold;-webkit-text-stroke:0.22px;">'</span>
<svg style="left:47px;top:10.5px" width="8" height="8" viewBox="0 0 8 8"><polygon points="1,0.6 5,0.6 7,2.6 7,7.4 1,7.4" fill="#fdfdfd" stroke="#aab0b4" stroke-width="0.6"/><polygon points="5,0.6 5,2.6 7,2.6" fill="#d3d7d9"/></svg>
<svg style="left:57.5px;top:10.5px" width="8.5" height="8" viewBox="0 0 8.5 8"><polygon points="0.8,2.4 3,2.4 3.8,3.2 6.6,3.2 6.6,7.2 0.8,7.2" fill="#e3a63c"/><polygon points="0.8,7.2 2,4.2 8,4.2 6.6,7.2" fill="#f5cd7c"/><polygon points="5.6,0.5 7.8,0.5 7.8,2.7" fill="#3c4043"/></svg>
<svg style="left:68.8px;top:10.5px" width="8" height="8" viewBox="0 0 8 8"><rect x="0.7" y="0.7" width="6.6" height="6.8" fill="#8e9498"/><rect x="1.8" y="0.7" width="4.4" height="3.4" fill="#f3f4f5"/><rect x="2" y="5" width="4" height="2.5" fill="#5fb3e0"/><rect x="2.6" y="5.5" width="1.3" height="2" fill="#e9f6fc"/></svg>
<svg style="left:79.5px;top:10.8px" width="8" height="7.5" viewBox="0 0 8 7.5"><path d="M2.2 3.2 C4.6 1.4 7 2.8 6.6 5.2 C6.4 6.2 5.6 6.8 4.8 7" fill="none" stroke="#9aa0a4" stroke-width="0.9"/><polygon points="0.6,2 3.4,2.2 1.4,4.6" fill="#9aa0a4"/></svg>
<svg style="left:89.70px;top:13.40px" width="2.4" height="1.6" viewBox="0 0 2.4 1.6"><polygon points="0,0 2.4,0 1.2,1.4" fill="#b3b8bb"/></svg>
<svg style="left:96px;top:10.8px" width="8" height="7.5" viewBox="0 0 8 7.5"><path d="M5.8 3.2 C3.4 1.4 1 2.8 1.4 5.2 C1.6 6.2 2.4 6.8 3.2 7" fill="none" stroke="#b3b8bb" stroke-width="0.9"/><polygon points="7.4,2 4.6,2.2 6.6,4.6" fill="#b3b8bb"/></svg>
<svg style="left:106.50px;top:13.40px" width="2.4" height="1.6" viewBox="0 0 2.4 1.6"><polygon points="0,0 2.4,0 1.2,1.4" fill="#c3c8cb"/></svg>
<svg style="left:112.5px;top:10.5px" width="8" height="8" viewBox="0 0 8 8"><g fill="#e9f6fc" stroke="#43a7db" stroke-width="0.6"><rect x="0.8" y="3" width="2" height="1.8"/><rect x="0.8" y="5.4" width="2" height="1.8"/></g><path d="M2.6 1.8 A1.6 1.6 0 0 1 5.8 1.4" fill="none" stroke="#0f5f8d" stroke-width="0.9"/><polygon points="5,0.2 7,1.6 5,2.6" fill="#0f5f8d"/><g stroke="#8a9094" stroke-width="0.6"><line x1="3.6" y1="4" x2="7.2" y2="4"/><line x1="3.6" y1="5.4" x2="7.2" y2="5.4"/><line x1="3.6" y1="6.8" x2="7.2" y2="6.8"/></g></svg>
<svg style="left:123.2px;top:10.5px" width="8.5" height="8" viewBox="0 0 8.5 8"><rect x="0.8" y="0.8" width="5" height="4" fill="#f3f9fc" stroke="#9cc4dc" stroke-width="0.6"/><rect x="2.2" y="2.4" width="5.2" height="4.4" rx="0.8" fill="#f3f9fc" stroke="#6fb0d8" stroke-width="0.7"/><path d="M3.4 4.4 L4.6 5.6 L6.4 3.6" fill="none" stroke="#3a9bd2" stroke-width="0.8"/></svg>
<svg style="left:134.10px;top:13.35px" width="2.6" height="1.7000000000000002" viewBox="0 0 2.6 1.7000000000000002"><polygon points="0,0 2.6,0 1.3,1.5" fill="#4b5155"/></svg>
<svg style="left:141px;top:11.4px" width="7" height="6.5" viewBox="0 0 7 6.5"><rect x="0.7" y="0.7" width="5" height="4.2" fill="#eef0f1" stroke="#9aa0a4" stroke-width="0.5"/><path d="M2 1.8 L4.4 3.8 M4.4 1.8 L2 3.8" stroke="#6b7175" stroke-width="0.7"/></svg>
<div style="left:149.7px;top:9.5px;width:0.6px;height:10px;background:#c4c9cb;"></div>
<svg style="left:152.90px;top:13.10px" width="3.6" height="2.2" viewBox="0 0 3.6 2.2"><polygon points="0,0 3.6,0 1.8,2.0" fill="#3c4043"/></svg>
<div style="left:776.2px;top:14.5px;width:4.4px;height:0.7px;background:#c2c7c9;"></div>
<div style="left:787.8px;top:12px;width:5px;height:3.9px;background:transparent;border:0.7px solid #c2c7c9;border-top-width:1px;box-sizing:border-box;"></div>
<svg style="left:799.6px;top:11.6px" width="5" height="5" viewBox="0 0 5 5"><path d="M0.5 0.5 L4.5 4.5 M4.5 0.5 L0.5 4.5" stroke="#c2c7c9" stroke-width="0.7"/></svg>
<svg style="left:763.5px;top:23.2px" width="6" height="4.5" viewBox="0 0 6 4.5"><path d="M0.6 3.4 L3 1 L5.4 3.4" fill="none" stroke="#f2f4f4" stroke-width="1.1"/></svg>
<svg style="left:773.5px;top:22.8px" width="6.5" height="6.5" viewBox="0 0 6.5 6.5"><circle cx="3.8" cy="2.6" r="1.7" fill="none" stroke="#f2f4f4" stroke-width="0.9"/><line x1="2.6" y1="3.8" x2="0.7" y2="5.8" stroke="#f2f4f4" stroke-width="1"/></svg>
<svg style="left:784px;top:23.2px" width="6" height="5.5" viewBox="0 0 6 5.5"><ellipse cx="2.8" cy="3" rx="2.4" ry="2.3" fill="#e8ebec"/><path d="M0.8 2.2 H4.8 M0.6 3.6 H5" stroke="#6b7175" stroke-width="0.6"/></svg>
<svg style="left:793.40px;top:25.00px" width="2.8" height="1.7999999999999998" viewBox="0 0 2.8 1.7999999999999998"><polygon points="0,0 2.8,0 1.4,1.5999999999999999" fill="#f2f4f4"/></svg>
<span style="left:801.45px;top:22.20px;font-size:6.4px;line-height:8px;color:#f2f4f4;font-weight:bold;">?</span>
<svg style="left:13.5px;top:83px" width="7" height="8" viewBox="0 0 7 8"><path d="M1.6 0.6 V7.2 M1.6 3.8 H4.6" stroke="#4b5155" stroke-width="0.8" fill="none"/><rect x="0.9" y="0.4" width="1.5" height="1.4" fill="#4b5155"/><rect x="0.9" y="6" width="1.5" height="1.4" fill="#4b5155"/><polygon points="4.2,2.6 6.2,3.8 4.2,5" fill="#4b5155"/></svg>
<svg style="left:25px;top:82.8px" width="9" height="8.5" viewBox="0 0 9 8.5"><g fill="#f6e2b3" stroke="#c9a458" stroke-width="0.6"><ellipse cx="3.4" cy="2.6" rx="2.6" ry="1.7" transform="rotate(25 3.4 2.6)"/><ellipse cx="4.6" cy="4.4" rx="2.6" ry="1.7" transform="rotate(25 4.6 4.4)"/><ellipse cx="5.6" cy="6" rx="2.6" ry="1.7" transform="rotate(25 5.6 6)"/></g></svg>
<svg style="left:15.40px;top:98.70px" width="4.0" height="2.4" viewBox="0 0 4.0 2.4"><polygon points="0,0 4.0,0 2.0,2.2" fill="#4b5155"/></svg>
<svg style="left:21.6px;top:97px" width="7" height="7" viewBox="0 0 7 7"><polygon points="0.6,2 1.8,0.8 6,0.8 6,5 4.8,6.4 0.6,6.4" fill="#3e9a3a"/><rect x="0.6" y="2" width="4.2" height="4.4" fill="#5cba50"/><polygon points="0.6,2 1.8,0.8 6,0.8 4.8,2" fill="#8fd685"/></svg>
<div style="left:31.2px;top:96.5px;width:0.6px;height:7px;background:repeating-linear-gradient(#c3c8cb 0 0.7px,transparent 0.7px 1.4px);"></div>
<svg style="left:41.6px;top:96.2px" width="8.5" height="7.5" viewBox="0 0 8.5 7.5"><g fill="#3aa0d6"><rect x="2.6" y="0.8" width="5" height="1.7"/><rect x="2.6" y="3" width="5" height="1.7"/><rect x="2.6" y="5.2" width="5" height="1.7"/></g><g fill="#4b5155"><rect x="0.6" y="1.2" width="1.2" height="0.9"/><rect x="0.6" y="3.4" width="1.2" height="0.9"/><rect x="0.6" y="5.6" width="1.2" height="0.9"/></g></svg>
<svg style="left:53.4px;top:96.2px" width="5.5" height="7.5" viewBox="0 0 5.5 7.5"><g fill="#4b5155"><rect x="0.6" y="0.8" width="1.2" height="1.2"/><rect x="2.8" y="0.8" width="1.8" height="1.2"/><rect x="0.6" y="3.1" width="1.2" height="1.2"/><rect x="2.8" y="3.1" width="1.8" height="1.2"/><rect x="0.6" y="5.4" width="1.2" height="1.2"/><rect x="2.8" y="5.4" width="1.8" height="1.2"/></g></svg>
<svg style="left:63.4px;top:96.2px" width="8" height="7.5" viewBox="0 0 8 7.5"><rect x="0.6" y="0.8" width="2.6" height="6" fill="#2e8fc4"/><rect x="3.6" y="0.8" width="3.4" height="6" fill="#a6daf2" stroke="#3aa0d6" stroke-width="0.4"/><path d="M3.6 2.8 H7 M3.6 4.8 H7" stroke="#3aa0d6" stroke-width="0.4"/><ellipse cx="5.6" cy="6.2" rx="1.6" ry="0.9" fill="#4b5155"/></svg>
<div style="left:74.2px;top:95.5px;width:0.6px;height:9px;background:#cfd3d5;"></div>
<svg style="left:78px;top:96px" width="7" height="8" viewBox="0 0 7 8"><path d="M1 1.4 H5.4 V3 C6.4 3 6.4 5 5.4 5 V7 H1 Z" fill="#f6dc9c" stroke="#d8a848" stroke-width="0.6"/><circle cx="1.4" cy="1.4" r="1" fill="#f2a027"/></svg>
<div style="left:88.8px;top:95.5px;width:0.6px;height:9px;background:#cfd3d5;"></div>
<svg style="left:92.6px;top:96px" width="8.5" height="8" viewBox="0 0 8.5 8"><path d="M1.4 0.8 V7" stroke="#4b5155" stroke-width="0.7"/><g fill="#2e8fc4"><rect x="0.7" y="0.6" width="1.5" height="1.3"/><rect x="0.7" y="3" width="1.5" height="1.3"/><rect x="0.7" y="5.4" width="1.5" height="1.3"/></g><polygon points="3,3.4 7.8,3.4 6,5.4 6,7.2 4.8,7.2 4.8,5.4" fill="#3c4043"/></svg>
<span style="left:110.95px;top:94.80px;font-size:7px;line-height:9px;color:#5a6064;font-weight:bold;-webkit-text-stroke:0.22px;">»</span>
<svg style="left:119px;top:96px" width="7.5" height="8.5" viewBox="0 0 7.5 8.5"><polygon points="0.8,0.6 4.4,0.6 6,2.2 6,7.2 0.8,7.2" fill="#f3f4f5" stroke="#c3c8cb" stroke-width="0.6"/><path d="M1.8 3.4 H5 M1.8 4.6 H5 M1.8 5.8 H5" stroke="#cfd3d5" stroke-width="0.5"/><polygon points="5.4,7 7,7 7,8.2" fill="#8a9094"/></svg>
<svg style="left:14.2px;top:108.8px" width="7.5" height="7.5" viewBox="0 0 7.5 7.5"><path d="M0.8 0.8 H6.6 L4.4 3.6 V6.6 L3 5.8 V3.6 Z" fill="#fbfcfc" stroke="#6b7175" stroke-width="0.7"/></svg>
<div style="left:23px;top:107px;width:86.3px;height:11.6px;background:#ffffff;border:0.7px solid #d3d7d9;border-radius:1.2px;box-sizing:border-box;box-shadow:0 0.5px 0.8px rgba(0,0,0,.08);"></div>
<svg style="left:103.2px;top:110.8px" width="4" height="4" viewBox="0 0 4 4"><path d="M0.5 0.5 L3.3 3.3 M3.3 0.5 L0.5 3.3" stroke="#b3b8bb" stroke-width="0.5"/></svg>
<svg style="left:111.40px;top:111.70px" width="3.6" height="2.2" viewBox="0 0 3.6 2.2"><polygon points="0,0 3.6,0 1.8,2.0" fill="#4b5155"/></svg>
<svg style="left:119.8px;top:110px" width="5.5" height="5.5" viewBox="0 0 5.5 5.5"><path d="M2.6 0.4 V4.8 M0.4 2.6 H4.8" stroke="#7d8387" stroke-width="0.8"/></svg>
<div style="left:13px;top:121.4px;width:114.6px;height:8.8px;background:#f9fafb;border:0.6px solid #e4e7e9;box-sizing:border-box;"></div>
<div style="left:17.7px;top:146px;width:0.5px;height:29px;background:#d3d7d9;"></div>
<div style="left:17.7px;top:150.45px;width:3.6px;height:0.5px;background:#d3d7d9;"></div>
<div style="left:17.7px;top:158.15px;width:3.6px;height:0.5px;background:#d3d7d9;"></div>
<div style="left:17.7px;top:166.15px;width:3.6px;height:0.5px;background:#d3d7d9;"></div>
<div style="left:17.7px;top:173.85px;width:3.6px;height:0.5px;background:#d3d7d9;"></div>
<svg style="left:14px;top:131.4px" width="7" height="7" viewBox="0 0 7 7"><polygon points="0.5,1.8 1.8,0.5 6.3,0.5 6.3,5 5,6.4 0.5,6.4" fill="#3d9ccc"/><rect x="0.5" y="1.8" width="4.5" height="4.6" fill="#a6daf2"/><polygon points="0.5,1.8 1.8,0.5 6.3,0.5 5,1.8" fill="#d4eefa"/></svg>
<svg style="left:23.5px;top:131.6px" width="3.6" height="3.4" viewBox="0 0 3.6 3.4"><polygon points="1.8,0.2 3.5,3.2 0.1,3.2" fill="#f2b62a"/></svg>
<span style="left:27.70px;top:132.60px;font-size:4.9px;line-height:6px;color:#5c6266;transform:scaleX(0.8048);transform-origin:0 50%;-webkit-text-stroke:0.12px;">PRT0005.PRT</span>
<svg style="left:16.75px;top:141.50px" width="1.8" height="3.0" viewBox="0 0 1.8 3.0"><polygon points="0,0 1.7,1.5 0,3.0" fill="#3c4043"/></svg>
<svg style="left:23.3px;top:139.4px" width="6.5" height="7" viewBox="0 0 6.5 7"><rect x="0.5" y="0.5" width="5.4" height="6" fill="#f3f9fc" stroke="#c3c8cb" stroke-width="0.5"/><rect x="0.5" y="0.5" width="2" height="6" fill="#3aa0d6"/><line x1="4" y1="0.5" x2="4" y2="6.5" stroke="#c3c8cb" stroke-width="0.5"/></svg>
<span style="left:32.20px;top:139.50px;font-size:5.4px;line-height:7px;color:#5c6266;transform:scaleX(0.8441);transform-origin:0 50%;-webkit-text-stroke:0.12px;">Design Items</span>
<svg style="left:22.8px;top:148.2px" width="7" height="5" viewBox="0 0 7 5"><polygon points="0.7,4.2 2.2,0.8 6.4,0.8 4.9,4.2" fill="none" stroke="#a38a52" stroke-width="0.75"/></svg>
<span style="left:32.20px;top:147.20px;font-size:5.4px;line-height:7px;color:#5c6266;transform:scaleX(0.7501);transform-origin:0 50%;-webkit-text-stroke:0.12px;">RIGHT</span>
<svg style="left:22.8px;top:155.9px" width="7" height="5" viewBox="0 0 7 5"><polygon points="0.7,4.2 2.2,0.8 6.4,0.8 4.9,4.2" fill="none" stroke="#a38a52" stroke-width="0.75"/></svg>
<span style="left:32.20px;top:154.90px;font-size:5.4px;line-height:7px;color:#5c6266;transform:scaleX(0.7089);transform-origin:0 50%;-webkit-text-stroke:0.12px;">TOP</span>
<svg style="left:22.8px;top:163.9px" width="7" height="5" viewBox="0 0 7 5"><polygon points="0.7,4.2 2.2,0.8 6.4,0.8 4.9,4.2" fill="none" stroke="#a38a52" stroke-width="0.75"/></svg>
<span style="left:32.20px;top:162.90px;font-size:5.4px;line-height:7px;color:#5c6266;transform:scaleX(0.7689);transform-origin:0 50%;-webkit-text-stroke:0.12px;">FRONT</span>
<svg style="left:22.6px;top:170.2px" width="8" height="8" viewBox="0 0 8 8"><path d="M2.6 0.5 V4.8 L0.6 7.2 M2.6 4.8 L7 5.6" stroke="#a38a52" stroke-width="0.75" fill="none"/></svg>
<span style="left:32.20px;top:170.60px;font-size:5.4px;line-height:7px;color:#5c6266;transform:scaleX(0.6846);transform-origin:0 50%;-webkit-text-stroke:0.12px;">PRT_CSYS_DEF</span>
<svg style="left:16.75px;top:180.70px" width="1.8" height="3.0" viewBox="0 0 1.8 3.0"><polygon points="0,0 1.7,1.5 0,3.0" fill="#3c4043"/></svg>
<svg style="left:22.6px;top:178.4px" width="7.5" height="7.5" viewBox="0 0 7.5 7.5"><polygon points="0.6,2.8 3,0.6 6.8,0.6 6.8,4.4 4.4,6.8 0.6,6.8" fill="#6fc0e8"/><polygon points="4.4,2.8 6.8,0.6 6.8,4.4 4.4,6.8" fill="#3d9ccc"/><rect x="0.6" y="2.8" width="3.8" height="4" fill="#f3f4f4" stroke="#dfe2e4" stroke-width="0.4"/></svg>
<span style="left:32.20px;top:178.70px;font-size:5.4px;line-height:7px;color:#5c6266;transform:scaleX(0.8263);transform-origin:0 50%;-webkit-text-stroke:0.12px;">Extrude 1</span>
<svg style="left:16.75px;top:188.50px" width="1.8" height="3.0" viewBox="0 0 1.8 3.0"><polygon points="0,0 1.7,1.5 0,3.0" fill="#3c4043"/></svg>
<svg style="left:22.6px;top:186.2px" width="7.5" height="7.5" viewBox="0 0 7.5 7.5"><polygon points="0.6,2.8 3,0.6 6.8,0.6 6.8,4.4 4.4,6.8 0.6,6.8" fill="#6fc0e8"/><polygon points="4.4,2.8 6.8,0.6 6.8,4.4 4.4,6.8" fill="#3d9ccc"/><rect x="0.6" y="2.8" width="3.8" height="4" fill="#f3f4f4" stroke="#dfe2e4" stroke-width="0.4"/></svg>
<span style="left:32.20px;top:186.50px;font-size:5.4px;line-height:7px;color:#5c6266;transform:scaleX(0.8350);transform-origin:0 50%;-webkit-text-stroke:0.12px;">Extrude 2</span>
<div style="left:14px;top:196.1px;width:114px;height:1.4px;background:#abdfa0;"></div>
<div style="left:14px;top:195.8px;width:0.9px;height:2px;background:#5cba50;"></div>
<div style="left:13px;top:521.6px;width:115px;height:0.6px;background:#dfe3e5;"></div>
<svg style="left:15.40px;top:528.40px" width="4.0" height="2.4" viewBox="0 0 4.0 2.4"><polygon points="0,0 4.0,0 2.0,2.2" fill="#4b5155"/></svg>
<svg style="left:21.8px;top:526px" width="7.5" height="7.5" viewBox="0 0 7.5 7.5"><polygon points="0.5,2.6 2.6,0.6 7,0.6 4.9,2.6" fill="#4fae45"/><polygon points="0.5,2.6 4.9,2.6 7,0.6 7,1.8 4.9,3.8 0.5,3.8" fill="#3e9a3a"/><polygon points="0.5,4.2 4.9,4.2 7,2.4 7,3.4 4.9,5.2 0.5,5.2" fill="#8a9094"/><polygon points="0.5,5.6 4.9,5.6 7,3.8 7,4.8 4.9,6.8 0.5,6.8" fill="#9aa0a4"/></svg>
<div style="left:32.8px;top:526px;width:0.6px;height:7px;background:repeating-linear-gradient(#c3c8cb 0 0.7px,transparent 0.7px 1.4px);"></div>
<svg style="left:43.4px;top:525.8px" width="8.5" height="7.5" viewBox="0 0 8.5 7.5"><g fill="#3aa0d6"><rect x="2.6" y="0.8" width="5" height="1.7"/><rect x="2.6" y="3" width="5" height="1.7"/><rect x="2.6" y="5.2" width="5" height="1.7"/></g><g fill="#4b5155"><rect x="0.6" y="1.2" width="1.2" height="0.9"/><rect x="0.6" y="3.4" width="1.2" height="0.9"/><rect x="0.6" y="5.6" width="1.2" height="0.9"/></g></svg>
<svg style="left:54.6px;top:525.8px" width="5.5" height="7.5" viewBox="0 0 5.5 7.5"><g fill="#4b5155"><rect x="0.6" y="0.8" width="1.2" height="1.2"/><rect x="2.8" y="0.8" width="1.8" height="1.2"/><rect x="0.6" y="3.1" width="1.2" height="1.2"/><rect x="2.8" y="3.1" width="1.8" height="1.2"/><rect x="0.6" y="5.4" width="1.2" height="1.2"/><rect x="2.8" y="5.4" width="1.8" height="1.2"/></g></svg>
<div style="left:64.7px;top:524.5px;width:0.6px;height:10px;background:#cfd3d5;"></div>
<div style="left:67.3px;top:524.3px;width:10.8px;height:10.4px;background:#dcdfe1;border:0.6px solid #bfc4c7;box-sizing:border-box;"></div>
<div style="left:78.1px;top:524.3px;width:10.8px;height:10.4px;background:#dcdfe1;border:0.6px solid #bfc4c7;box-sizing:border-box;"></div>
<svg style="left:68.6px;top:525.6px" width="8.5" height="8" viewBox="0 0 8.5 8"><polygon points="0.8,2.2 2.2,0.8 7.6,0.8 6.2,2.2" fill="#6fc0e8"/><rect x="0.8" y="2.2" width="5.4" height="1.4" fill="#f3f9fc" stroke="#5b6cae" stroke-width="0.4"/><rect x="0.8" y="4.4" width="5.4" height="2.4" fill="#f3f4f5" stroke="#7d8387" stroke-width="0.4"/><ellipse cx="5.8" cy="6.2" rx="1.6" ry="0.9" fill="#4b5155"/></svg>
<svg style="left:79.4px;top:525.6px" width="8.5" height="8" viewBox="0 0 8.5 8"><polygon points="0.8,3 2.6,1.2 7.8,1.2 6,3" fill="#8fd0ee" stroke="#3aa0d6" stroke-width="0.4"/><polygon points="0.8,3 6,3 7.8,1.2 7.8,2.6 6,4.4 0.8,4.4" fill="#d4eefa" stroke="#3aa0d6" stroke-width="0.4"/><rect x="4.6" y="4" width="2.6" height="2.8" fill="#eef0f1" stroke="#6b7175" stroke-width="0.5"/></svg>
<span style="left:99.15px;top:524.50px;font-size:7px;line-height:9px;color:#5a6064;font-weight:bold;-webkit-text-stroke:0.22px;">»</span>
<svg style="left:106.6px;top:525.6px" width="9" height="8.5" viewBox="0 0 9 8.5"><polygon points="0.8,2.4 2.4,0.8 8,0.8 6.4,2.4" fill="#8fd0ee" stroke="#3aa0d6" stroke-width="0.4"/><path d="M0.8 3.8 H6.4 M0.8 5.2 H6.4 M0.8 6.6 H6.4" stroke="#8a9094" stroke-width="0.6"/><polygon points="6.6,6.8 8.4,6.8 8.4,8.2" fill="#6b7175"/></svg>
<svg style="left:119px;top:525.6px" width="7.5" height="8.5" viewBox="0 0 7.5 8.5"><polygon points="0.8,0.6 4.4,0.6 6,2.2 6,7.2 0.8,7.2" fill="#f3f4f5" stroke="#d3d7d9" stroke-width="0.6"/><path d="M1.8 3.4 H5 M1.8 4.6 H5 M1.8 5.8 H5" stroke="#dfe2e4" stroke-width="0.5"/><polygon points="5.4,7 7,7 7,8.2" fill="#c3c8cb"/></svg>
<div style="left:13px;top:536.9px;width:114.6px;height:10.6px;background:#f1f3f4;border:0.6px solid #d7dbdd;box-sizing:border-box;"></div>
<div style="left:23.4px;top:537.2px;width:0.6px;height:10px;background:#d7dbdd;"></div>
<div style="left:120.2px;top:537.2px;width:0.6px;height:10px;background:#d7dbdd;"></div>
<svg style="left:16px;top:538.8px" width="5" height="7" viewBox="0 0 5 7"><polygon points="0.8,0.6 0.8,5.6 2.2,4.4 3.2,6.4 4,6 3,4 4.6,4" fill="#fbfcfc" stroke="#b3b8bb" stroke-width="0.5"/></svg>
<span style="left:26.90px;top:538.80px;font-size:5.6px;line-height:7px;color:#bcc1c4;transform:scaleX(0.8091);transform-origin:0 50%;-webkit-text-stroke:0.22px;">PRT0005.PRT</span>
<svg style="left:122.60px;top:541.40px" width="3.2" height="2.0" viewBox="0 0 3.2 2.0"><polygon points="0,0 3.2,0 1.6,1.8" fill="#8a9094"/></svg>
<svg style="left:13.6px;top:548.2px" width="8" height="7.5" viewBox="0 0 8 7.5"><polygon points="0.6,1.8 2,0.5 7.2,0.5 5.8,1.8" fill="#6fc0e8"/><rect x="0.6" y="1.8" width="5.2" height="1.2" fill="#f3f9fc" stroke="#5b8cae" stroke-width="0.4"/><rect x="0.6" y="3.6" width="5.2" height="1.2" fill="#f3f9fc" stroke="#5b8cae" stroke-width="0.4"/><rect x="0.6" y="5.4" width="5.2" height="1.2" fill="#f3f9fc" stroke="#5b8cae" stroke-width="0.4"/></svg>
<span style="left:24.90px;top:548.10px;font-size:5.8px;line-height:7px;color:#5c6266;transform:scaleX(0.8501);transform-origin:0 50%;-webkit-text-stroke:0.12px;">Layers</span>
<div style="left:17.7px;top:571px;width:0.5px;height:24px;background:#dde0e2;"></div>
<div style="left:17.7px;top:610px;width:0.5px;height:4.4px;background:#dde0e2;"></div>
<svg style="left:16.65px;top:557.90px" width="1.8" height="3.0" viewBox="0 0 1.8 3.0"><polygon points="0,0 1.7,1.5 0,3.0" fill="#3c4043"/></svg>
<svg style="left:22.8px;top:555.4px" width="7" height="7.5" viewBox="0 0 7 7.5"><rect x="0.8" y="0.6" width="4.6" height="5" fill="#fbf3df" stroke="#8a9094" stroke-width="0.5"/><path d="M1.6 1.2 L2.8 2.2 L1.6 3.2 L2.8 4.2" fill="none" stroke="#3aa0d6" stroke-width="0.7"/><path d="M0.8 5.8 C2 7.2 5 7.2 6.2 5.6" fill="none" stroke="#8a9094" stroke-width="0.5"/></svg>
<span style="left:34.00px;top:555.90px;font-size:5.6px;line-height:7px;color:#5c6266;transform:scaleX(0.8101);transform-origin:0 50%;-webkit-text-stroke:0.12px;">01___PRT_ALL_DTM_PLN</span>
<svg style="left:16.65px;top:565.70px" width="1.8" height="3.0" viewBox="0 0 1.8 3.0"><polygon points="0,0 1.7,1.5 0,3.0" fill="#3c4043"/></svg>
<svg style="left:22.8px;top:565.6px" width="7" height="4" viewBox="0 0 7 4"><polygon points="0.6,3 2,0.8 6.4,0.8 5,3" fill="#fbfcfc" stroke="#8a9094" stroke-width="0.5"/></svg>
<span style="left:34.00px;top:563.70px;font-size:5.6px;line-height:7px;color:#5c6266;transform:scaleX(0.8086);transform-origin:0 50%;-webkit-text-stroke:0.12px;">01___PRT_DEF_DTM_PLN</span>
<div style="left:17.7px;top:574.75px;width:3.6px;height:0.5px;background:#d9dcde;"></div>
<svg style="left:22.8px;top:571px" width="7" height="7.5" viewBox="0 0 7 7.5"><rect x="0.8" y="0.6" width="4.6" height="5" fill="#fbf3df" stroke="#8a9094" stroke-width="0.5"/><path d="M1.6 1.2 L2.8 2.2 L1.6 3.2 L2.8 4.2" fill="none" stroke="#3aa0d6" stroke-width="0.7"/><path d="M0.8 5.8 C2 7.2 5 7.2 6.2 5.6" fill="none" stroke="#8a9094" stroke-width="0.5"/></svg>
<span style="left:34.00px;top:571.50px;font-size:5.6px;line-height:7px;color:#5c6266;transform:scaleX(0.7923);transform-origin:0 50%;-webkit-text-stroke:0.12px;">02___PRT_ALL_AXES</span>
<div style="left:17.7px;top:582.55px;width:3.6px;height:0.5px;background:#d9dcde;"></div>
<svg style="left:22.8px;top:578.8px" width="7" height="7.5" viewBox="0 0 7 7.5"><rect x="0.8" y="0.6" width="4.6" height="5" fill="#fbf3df" stroke="#8a9094" stroke-width="0.5"/><path d="M1.6 1.2 L2.8 2.2 L1.6 3.2 L2.8 4.2" fill="none" stroke="#3aa0d6" stroke-width="0.7"/><path d="M0.8 5.8 C2 7.2 5 7.2 6.2 5.6" fill="none" stroke="#8a9094" stroke-width="0.5"/></svg>
<span style="left:34.00px;top:579.30px;font-size:5.6px;line-height:7px;color:#5c6266;transform:scaleX(0.7912);transform-origin:0 50%;-webkit-text-stroke:0.12px;">03___PRT_ALL_CURVES</span>
<div style="left:17.7px;top:590.45px;width:3.6px;height:0.5px;background:#d9dcde;"></div>
<svg style="left:22.8px;top:586.7px" width="7" height="7.5" viewBox="0 0 7 7.5"><rect x="0.8" y="0.6" width="4.6" height="5" fill="#fbf3df" stroke="#8a9094" stroke-width="0.5"/><path d="M1.6 1.2 L2.8 2.2 L1.6 3.2 L2.8 4.2" fill="none" stroke="#3aa0d6" stroke-width="0.7"/><path d="M0.8 5.8 C2 7.2 5 7.2 6.2 5.6" fill="none" stroke="#8a9094" stroke-width="0.5"/></svg>
<span style="left:34.00px;top:587.20px;font-size:5.6px;line-height:7px;color:#5c6266;transform:scaleX(0.8065);transform-origin:0 50%;-webkit-text-stroke:0.12px;">04___PRT_ALL_DTM_PNT</span>
<svg style="left:16.65px;top:597.00px" width="1.8" height="3.0" viewBox="0 0 1.8 3.0"><polygon points="0,0 1.7,1.5 0,3.0" fill="#3c4043"/></svg>
<svg style="left:22.8px;top:594.5px" width="7" height="7.5" viewBox="0 0 7 7.5"><rect x="0.8" y="0.6" width="4.6" height="5" fill="#fbf3df" stroke="#8a9094" stroke-width="0.5"/><path d="M1.6 1.2 L2.8 2.2 L1.6 3.2 L2.8 4.2" fill="none" stroke="#3aa0d6" stroke-width="0.7"/><path d="M0.8 5.8 C2 7.2 5 7.2 6.2 5.6" fill="none" stroke="#8a9094" stroke-width="0.5"/></svg>
<span style="left:34.00px;top:595.00px;font-size:5.6px;line-height:7px;color:#5c6266;transform:scaleX(0.7988);transform-origin:0 50%;-webkit-text-stroke:0.12px;">05___PRT_ALL_DTM_CSYS</span>
<svg style="left:16.65px;top:604.80px" width="1.8" height="3.0" viewBox="0 0 1.8 3.0"><polygon points="0,0 1.7,1.5 0,3.0" fill="#3c4043"/></svg>
<svg style="left:22.8px;top:604.6999999999999px" width="7" height="4" viewBox="0 0 7 4"><polygon points="0.6,3 2,0.8 6.4,0.8 5,3" fill="#fbfcfc" stroke="#8a9094" stroke-width="0.5"/></svg>
<span style="left:34.00px;top:602.80px;font-size:5.6px;line-height:7px;color:#5c6266;transform:scaleX(0.7936);transform-origin:0 50%;-webkit-text-stroke:0.12px;">05___PRT_DEF_DTM_CSYS</span>
<div style="left:17.7px;top:613.95px;width:3.6px;height:0.5px;background:#d9dcde;"></div>
<svg style="left:22.8px;top:610.2px" width="7" height="7.5" viewBox="0 0 7 7.5"><rect x="0.8" y="0.6" width="4.6" height="5" fill="#fbf3df" stroke="#8a9094" stroke-width="0.5"/><path d="M1.6 1.2 L2.8 2.2 L1.6 3.2 L2.8 4.2" fill="none" stroke="#3aa0d6" stroke-width="0.7"/><path d="M0.8 5.8 C2 7.2 5 7.2 6.2 5.6" fill="none" stroke="#8a9094" stroke-width="0.5"/></svg>
<span style="left:34.00px;top:610.70px;font-size:5.6px;line-height:7px;color:#5c6266;transform:scaleX(0.7794);transform-origin:0 50%;-webkit-text-stroke:0.12px;">06___PRT_ALL_SURFS</span>
<div style="left:121.8px;top:548px;width:5.8px;height:70px;background:#f3f5f6;border-left:0.5px solid #e0e3e5;"></div>
<div style="left:122.2px;top:553.8px;width:5px;height:47.6px;background:#fbfcfc;border:0.5px solid #d7dbdd;box-sizing:border-box;"></div>
<div style="left:122.2px;top:601.4px;width:5px;height:8.6px;background:#d3d7d9;"></div>
<svg style="left:123px;top:549.6px" width="3.6" height="2.4" viewBox="0 0 3.6 2.4"><polygon points="0,2.2 1.7,0.2 3.4,2.2" fill="#6b7175"/></svg>
<svg style="left:123px;top:612.4px" width="3.6" height="2.4" viewBox="0 0 3.6 2.4"><polygon points="0,0.2 1.7,2.2 3.4,0.2" fill="#6b7175"/></svg>
<div style="left:9px;top:617.6px;width:122px;height:1.2px;background:#f6f8f9;"></div>
<div style="left:9px;top:618.4px;width:800px;height:0.6px;background:#e6e9eb;"></div>
<div style="left:11.9px;top:621.4px;width:9px;height:9.8px;background:#d9dcde;border:0.6px solid #b7bcc0;box-sizing:border-box;"></div>
<svg style="left:12.6px;top:622.6px" width="8" height="8" viewBox="0 0 8 8"><rect x="0.6" y="1" width="2.4" height="5.6" fill="#a6daf2" stroke="#3a8fc0" stroke-width="0.5"/><rect x="3.4" y="1" width="3.6" height="5.6" fill="#fbfcfc"/><ellipse cx="5.4" cy="5.8" rx="1.7" ry="0.9" fill="#4b5155"/></svg>
<svg style="left:23.2px;top:621.8px" width="8.5" height="9" viewBox="0 0 8.5 9"><circle cx="4.2" cy="4.6" r="3.2" fill="#2e8fd8"/><path d="M2 3.4 C3.4 2.2 5 2.6 5.6 4 C4.6 5 3.4 6.4 3 7.2" fill="none" stroke="#a6daf2" stroke-width="0.9"/><ellipse cx="4.2" cy="4.6" rx="4.4" ry="1.4" transform="rotate(-35 4.2 4.6)" fill="none" stroke="#a8aeb2" stroke-width="0.6"/></svg>
<svg style="left:33.8px;top:622px" width="8.5" height="9" viewBox="0 0 8.5 9"><rect x="0.8" y="0.8" width="6.8" height="7" rx="0.8" fill="#f3f9fc" stroke="#6fb8e0" stroke-width="0.9"/><rect x="1.6" y="4" width="5.2" height="3.2" fill="#dcebf3"/></svg>
<div style="left:46.2px;top:621px;width:0.6px;height:10.4px;background:#cfd3d5;"></div>
<div style="left:49.2px;top:624.2px;width:1.4px;height:1.4px;background:#0f5f8d;"></div>
<span style="left:52.90px;top:622.50px;font-size:5.4px;line-height:7px;color:#62686c;transform:scaleX(0.8636);transform-origin:0 50%;-webkit-text-stroke:0.1px;">Feature id 1 (DATUM) - Highlighted.</span>
<div style="left:626px;top:621px;width:0.6px;height:10.4px;background:#dfe2e4;"></div>
<svg style="left:628.5px;top:621.5px" width="7" height="9" viewBox="0 0 7 9"><line x1="1.6" y1="0.8" x2="1.6" y2="8" stroke="#8a9094" stroke-width="0.6"/><polygon points="1.9,0.8 5.6,2 1.9,3.8" fill="#f2b62a"/></svg>
<span style="left:633.20px;top:625.90px;font-size:3.6px;line-height:5px;color:#5a6064;-webkit-text-stroke:0.22px;">1</span>
<div style="left:659.5px;top:621px;width:0.6px;height:10.4px;background:#dfe2e4;"></div>
<svg style="left:664px;top:622.4px" width="8.5" height="8" viewBox="0 0 8.5 8"><g fill="#3c4043"><rect x="0.8" y="2" width="2.6" height="4.8" rx="0.8"/><rect x="4.6" y="2" width="2.6" height="4.8" rx="0.8"/><rect x="1.6" y="0.6" width="1.6" height="2"/><rect x="4.8" y="0.6" width="1.6" height="2"/><rect x="3" y="2.6" width="2" height="1.6"/></g></svg>
<svg style="left:675.30px;top:625.45px" width="2.6" height="1.7000000000000002" viewBox="0 0 2.6 1.7000000000000002"><polygon points="0,0 2.6,0 1.3,1.5" fill="#4b5155"/></svg>
<div style="left:681px;top:621px;width:0.6px;height:10.4px;background:#dfe2e4;"></div>
<div style="left:724.3px;top:621.2px;width:77px;height:10.2px;background:#ffffff;border:0.6px solid #cfd3d5;box-sizing:border-box;"></div>
<div style="left:794.3px;top:621.5px;width:0.6px;height:9.6px;background:#cfd3d5;"></div>
<span style="left:727.30px;top:622.90px;font-size:5.4px;line-height:7px;color:#62686c;transform:scaleX(0.9617);transform-origin:0 50%;-webkit-text-stroke:0.1px;">Geometry</span>
<svg style="left:796.30px;top:625.40px" width="3.2" height="2.0" viewBox="0 0 3.2 2.0"><polygon points="0,0 3.2,0 1.6,1.8" fill="#3c4043"/></svg>
<svg style="left:803px;top:627px" width="5.4" height="5.4" viewBox="0 0 5.4 5.4"><polygon points="5.2,0.4 5.2,5.2 0.4,5.2" fill="#d5d9db"/></svg>
<div style="left:377.8px;top:84.2px;width:184.6px;height:12.7px;background:#fdfdfe;"></div>
<svg style="left:380.5px;top:86.5px" width="8" height="8" viewBox="0 0 8 8"><rect x="0.6" y="0.6" width="6" height="6" fill="#eef0f1" stroke="#c3c8cb" stroke-width="0.6"/><circle cx="3.4" cy="3.4" r="1.9" fill="#fbfcfc" stroke="#7fa9c4" stroke-width="0.7"/><line x1="4.8" y1="4.8" x2="7.2" y2="7.4" stroke="#9aa0a4" stroke-width="0.9"/></svg>
<svg style="left:391.8px;top:86.5px" width="8" height="8" viewBox="0 0 8 8"><circle cx="3.2" cy="3.2" r="2.5" fill="#e3f3fb" stroke="#4aa0d2" stroke-width="0.8"/><path d="M2 3.2 H4.4 M3.2 2 V4.4" stroke="#16608e" stroke-width="0.8"/><line x1="5" y1="5" x2="7.2" y2="7.4" stroke="#9aa0a4" stroke-width="0.9"/></svg>
<svg style="left:403px;top:86.5px" width="8" height="8" viewBox="0 0 8 8"><circle cx="3.2" cy="3.2" r="2.5" fill="#e3f3fb" stroke="#4aa0d2" stroke-width="0.8"/><path d="M2 3.2 H4.4" stroke="#16608e" stroke-width="0.8"/><line x1="5" y1="5" x2="7.2" y2="7.4" stroke="#9aa0a4" stroke-width="0.9"/></svg>
<svg style="left:414.6px;top:86.5px" width="8" height="8" viewBox="0 0 8 8"><rect x="0.6" y="0.6" width="6.6" height="6.6" fill="#fbfcfc" stroke="#c3c8cb" stroke-width="0.6"/><polygon points="7.2,0.6 7.2,7.2 0.6,7.2" fill="#4aa8da"/><line x1="0.8" y1="7" x2="7" y2="0.8" stroke="#16608e" stroke-width="0.7"/></svg>
<svg style="left:426.2px;top:86.5px" width="8.5" height="8.5" viewBox="0 0 8.5 8.5"><path d="M1 6.4 C2.4 6.2 3.2 5 3.8 4 L5 5 C4.2 6 3 7.2 1 6.4 Z" fill="#8a9094"/><path d="M3.8 4 L6.6 0.8 L7.4 1.6 L5 5 Z" fill="#b3b8bb"/><polygon points="6.4,7 7.8,7 7.8,8.2" fill="#6b7175"/></svg>
<svg style="left:437px;top:86.2px" width="9" height="9" viewBox="0 0 9 9"><polygon points="0.7,2.4 2.6,0.6 7.6,0.6 7.6,5.6 5.8,7.4 0.7,7.4" fill="#3a8fc0"/><polygon points="0.7,2.4 2.6,0.6 7.6,0.6 5.8,2.4" fill="#8fd0ee"/><rect x="0.7" y="2.4" width="5.1" height="5" fill="#fbfdfe" stroke="#2e8fc4" stroke-width="0.8"/><polygon points="7,7.2 8.4,7.2 8.4,8.4" fill="#6b7175"/></svg>
<svg style="left:448.8px;top:86.2px" width="9" height="9" viewBox="0 0 9 9"><circle cx="3.8" cy="3.8" r="3.2" fill="#c7e9f8" stroke="#3aa0d6" stroke-width="0.7"/><path d="M0.8 3 H6.8 M3.8 0.8 V3" stroke="#3aa0d6" stroke-width="0.5"/><rect x="4.4" y="4.2" width="2.8" height="3" fill="#c9cdd0"/><polygon points="7,7.2 8.4,7.2 8.4,8.4" fill="#6b7175"/></svg>
<svg style="left:460.2px;top:86.5px" width="8.5" height="8.5" viewBox="0 0 8.5 8.5"><rect x="0.7" y="0.7" width="6.2" height="6.4" fill="#dfe2e4" stroke="#c3c8cb" stroke-width="0.5"/><rect x="3.4" y="4.2" width="4" height="3" rx="0.5" fill="#2f3336"/><rect x="4.6" y="3.4" width="1.6" height="1.2" fill="#2f3336"/><circle cx="5.4" cy="5.8" r="0.8" fill="#9aa0a4"/></svg>
<svg style="left:471.6px;top:86.3px" width="9" height="8.5" viewBox="0 0 9 8.5"><path d="M0.8 3 C1.6 1 5 0.4 8 1.4 C8.4 4 7 6.4 4.4 7.6 C2 7 0.8 5 0.8 3 Z" fill="#7cc8ec" stroke="#3aa0d6" stroke-width="0.5"/><path d="M2 3 C3.6 2.2 6 2.2 7.6 2.8 M2.2 4.8 C3.8 4.2 5.6 4.2 7 4.8 M4.4 1 V7.4" stroke="#c7e9f8" stroke-width="0.4" fill="none"/></svg>
<svg style="left:483.2px;top:86.2px" width="9" height="9" viewBox="0 0 9 9"><polygon points="0.8,5.6 2.8,1 7.4,1 5.4,5.6" fill="#fbfcfc" stroke="#c9cdd0" stroke-width="0.5"/><line x1="0.8" y1="7.4" x2="7.4" y2="0.6" stroke="#3aa0d6" stroke-width="0.9"/><polygon points="7,7.2 8.4,7.2 8.4,8.4" fill="#6b7175"/></svg>
<svg style="left:494.8px;top:86.2px" width="9" height="9" viewBox="0 0 9 9"><g fill="#a38a52"><rect x="0.8" y="0.6" width="1.4" height="1.4"/><rect x="3.8" y="0.8" width="1.4" height="1.4"/><rect x="2.2" y="3.6" width="1.4" height="1.4"/><rect x="0.8" y="6" width="1.4" height="1.4"/><rect x="4.6" y="5.6" width="1.4" height="1.4"/></g><path d="M1.5 6.6 L3 4.2 L5.2 6.2" fill="none" stroke="#a38a52" stroke-width="0.5"/><polygon points="7,7.2 8.4,7.2 8.4,8.4" fill="#6b7175"/></svg>
<svg style="left:505.8px;top:86.3px" width="9" height="9" viewBox="0 0 9 9"><rect x="0.7" y="0.8" width="5" height="2.2" fill="#fbf3d4" stroke="#a8aeb2" stroke-width="0.5"/><path d="M5.8 2 H7.2 V6.4" fill="none" stroke="#3c4043" stroke-width="0.7"/><rect x="5.4" y="3.2" width="2.4" height="1.4" fill="#3c4043"/><rect x="5" y="5.8" width="3" height="1.8" fill="#3c4043"/></svg>
<svg style="left:517.6px;top:86.3px" width="9" height="9" viewBox="0 0 9 9"><path d="M1.6 1.2 L4 4 L7 3.4 M4 4 L1.8 7" stroke="#3c4043" stroke-width="0.7" fill="none"/><circle cx="1.6" cy="1.2" r="0.9" fill="#3e9a3a"/><circle cx="7.2" cy="3.4" r="1" fill="#e0524a"/><circle cx="1.8" cy="7" r="1" fill="#2e8fc4"/></svg>
<svg style="left:528.8px;top:86.3px" width="9" height="9" viewBox="0 0 9 9"><polygon points="4.2,1 7.6,7 0.8,7" fill="#f3f4f5" stroke="#b3b8bb" stroke-width="0.9"/><polygon points="4.2,3.4 5.6,6 2.8,6" fill="#dfe2e4"/></svg>
<div style="left:541.7px;top:87.2px;width:1.5px;height:6.2px;background:#a8aeb2;"></div>
<div style="left:544.9px;top:87.2px;width:1.5px;height:6.2px;background:#a8aeb2;"></div>
<svg style="left:551.5px;top:86.5px" width="9" height="8" viewBox="0 0 9 8"><polygon points="0.8,1.8 4.6,1.8 4.6,5.8 0.8,5.8 2.6,3.8" fill="#d3d7d9"/><rect x="5" y="1" width="2.6" height="5.8" fill="#c9cdd0"/></svg>
<span style="left:875.00px;top:10.00px;font-size:6.4px;line-height:8px;color:#a9adb0;transform:scaleX(0.8107);transform-origin:0 50%;-webkit-text-stroke:0.22px;">Creo ModelCHECK Report</span>
<div style="left:976.5px;top:13.9px;width:3.6px;height:0.7px;background:#9a9fa3;"></div>
<div style="left:984.8px;top:11.8px;width:4.8px;height:4px;background:transparent;border:0.6px solid #9a9fa3;border-top-width:1px;box-sizing:border-box;"></div>
<svg style="left:993.6px;top:11.4px" width="5" height="5" viewBox="0 0 5 5"><path d="M0.5 0.5 L4.5 4.5 M4.5 0.5 L0.5 4.5" stroke="#9a9fa3" stroke-width="0.7"/></svg>
<span style="left:886.50px;top:21.80px;font-size:6.6px;line-height:8px;color:#1a1a1a;transform:scaleX(0.8924);transform-origin:0 50%;font-weight:bold;">PRT0005.PRT</span>
<svg style="left:811.6px;top:31.6px" width="9.6" height="8.4" viewBox="0 0 9.6 8.4"><polygon points="0.6,4.6 3.7,2.7 3.7,6.5" fill="#16608e"/><path d="M3.1 5.5 Q3.8 7 5.2 7.4" fill="none" stroke="#16608e" stroke-width="1.05"/><polygon points="8.8,3.7 5.7,1.8 5.7,5.6" fill="#16608e"/><path d="M6.3 2.8 Q5.6 1.3 4.2 0.9" fill="none" stroke="#16608e" stroke-width="1.05"/></svg>
<svg style="left:921px;top:30.8px" width="7.5" height="9" viewBox="0 0 7.5 9"><line x1="1.4" y1="0.8" x2="1.4" y2="8.6" stroke="#9a9a9a" stroke-width="0.9"/><polygon points="1.9,0.6 6.8,2.2 1.9,4.6" fill="#2e9a4a"/></svg>
<svg style="left:930.7px;top:32.5px" width="6" height="6" viewBox="0 0 6 6"><circle cx="3" cy="3" r="2.8" fill="#e8282e"/><rect x="2.55" y="1.2" width="0.9" height="2.4" fill="#fff"/><rect x="2.55" y="4" width="0.9" height="0.9" fill="#fff"/></svg>
<span style="left:938.20px;top:31.60px;font-size:6.2px;line-height:8px;color:#333;transform:scaleX(0.9323);transform-origin:0 50%;-webkit-text-stroke:0.08px;text-decoration:underline;text-decoration-thickness:0.55px;text-underline-offset:0.6px;">Errors(1)</span>
<svg style="left:962.2px;top:32.6px" width="6.2" height="5.8" viewBox="0 0 6.2 5.8"><polygon points="3.1,0.2 6.0,5.6 0.2,5.6" fill="#f2c01e"/><rect x="2.75" y="2.088" width="0.7" height="1.74" fill="#5a4a10"/><rect x="2.75" y="4.292" width="0.7" height="0.6" fill="#5a4a10"/></svg>
<span style="left:969.60px;top:31.60px;font-size:6.2px;line-height:8px;color:#333;transform:scaleX(0.9393);transform-origin:0 50%;-webkit-text-stroke:0.08px;text-decoration:underline;text-decoration-thickness:0.55px;text-underline-offset:0.6px;">Warnings(2)</span>
<div style="left:812px;top:41.3px;width:186px;height:0.6px;background:#e6e6e6;"></div>
<div style="left:812.5px;top:44.4px;width:186px;height:10.8px;background:#fbfbfb;border:0.6px solid #e9e9e9;border-radius:1.5px;box-sizing:border-box;"></div>
<svg style="left:817.05px;top:48.00px" width="3.3" height="4.0" viewBox="0 0 3.3 4.0"><polygon points="0,0 3.3,2.0 0,4.0" fill="#707070"/></svg>
<span style="left:823.00px;top:46.00px;font-size:6.2px;line-height:8px;color:#3a3a3a;transform:scaleX(0.9211);transform-origin:0 50%;-webkit-text-stroke:0.1px;">Overview</span>
<div style="left:812.5px;top:60.5px;width:186px;height:95px;background:#f8f8f8;border:0.6px solid #e9e9e9;border-radius:1.5px;box-sizing:border-box;"></div>
<div style="left:812.5px;top:60.5px;width:186px;height:13.2px;background:#ebeced;border-radius:1.5px 1.5px 0 0;"></div>
<svg style="left:816.50px;top:65.10px" width="3.8" height="3.2" viewBox="0 0 3.8 3.2"><polygon points="0,0 3.8,0 1.9,3.2" fill="#606060"/></svg>
<span style="left:823.00px;top:62.80px;font-size:6.2px;line-height:8px;color:#3a3a3a;transform:scaleX(0.9340);transform-origin:0 50%;-webkit-text-stroke:0.1px;">Design intent</span>
<svg style="left:898.5px;top:63.6px" width="7.5" height="6.5" viewBox="0 0 7.5 6.5"><path d="M0.6 0.6 H6 L3.9 3 V5.6 L2.7 5 V3 Z" fill="#fbfbfb" stroke="#8a8a8a" stroke-width="0.6"/></svg>
<span style="left:907.20px;top:63.80px;font-size:6.2px;line-height:8px;color:#3a3a3a;transform:scaleX(0.9381);transform-origin:0 50%;-webkit-text-stroke:0.1px;">Category</span>
<svg style="left:935.5px;top:63.6px" width="7.5" height="6.5" viewBox="0 0 7.5 6.5"><path d="M0.6 0.6 H6 L3.9 3 V5.6 L2.7 5 V3 Z" fill="#fbfbfb" stroke="#8a8a8a" stroke-width="0.6"/><path d="M4.6 4 L6.6 6 M6.6 4.4 V6 H5" stroke="#5a5a5a" stroke-width="0.6" fill="none"/></svg>
<span style="left:945.00px;top:63.80px;font-size:6.2px;line-height:8px;color:#3a3a3a;transform:scaleX(0.8927);transform-origin:0 50%;-webkit-text-stroke:0.1px;">Type</span>
<svg style="left:822.00px;top:79.10px" width="3.8" height="3.2" viewBox="0 0 3.8 3.2"><polygon points="0,0 3.8,0 1.9,3.2" fill="#606060"/></svg>
<svg style="left:827.8px;top:77.9px" width="6.2" height="5.8" viewBox="0 0 6.2 5.8"><polygon points="3.1,0.2 6.0,5.6 0.2,5.6" fill="#f2c01e"/><rect x="2.75" y="2.088" width="0.7" height="1.74" fill="#5a4a10"/><rect x="2.75" y="4.292" width="0.7" height="0.6" fill="#5a4a10"/></svg>
<span style="left:837.00px;top:76.90px;font-size:6px;line-height:8px;color:#3a3a3a;transform:scaleX(0.8903);transform-origin:0 50%;-webkit-text-stroke:0.1px;">Datum Features on Unblanked Layers(4)</span>
<span style="left:834.20px;top:88.50px;font-size:5.8px;line-height:7px;color:#1a1a1a;transform:scaleX(0.9172);transform-origin:0 50%;font-weight:bold;">LAYER_DTM_BLANK</span>
<span style="left:834.20px;top:95.80px;font-size:5.8px;line-height:7px;color:#3a3a3a;transform:scaleX(0.9198);transform-origin:0 50%;-webkit-text-stroke:0.1px;">Number of Datum features that are on unblanked layers: 4</span>
<svg style="left:836px;top:107.6px" width="10" height="10" viewBox="0 0 10 10"><polygon points="3,0.4 3.9,2.6 6.2,2.8 4.4,4.2 5,6.6 3,5.2 1,6.6 1.6,4.2 0,2.8 2.2,2.6" fill="#f2c01e"/><circle cx="6.4" cy="6.2" r="2.6" fill="#fdeaea" stroke="#e03030" stroke-width="0.9"/><line x1="4.6" y1="4.4" x2="8.2" y2="8" stroke="#e03030" stroke-width="0.9"/><line x1="2" y1="2" x2="9" y2="9.4" stroke="#8a8a8a" stroke-width="0.4"/></svg>
<svg style="left:849.2px;top:107.6px" width="10" height="10" viewBox="0 0 10 10"><path d="M1 8.6 L6 3.8" stroke="#8a8a8a" stroke-width="1.6" stroke-linecap="round"/><path d="M3.4 6.4 L6.6 3.2" stroke="#6a6a6a" stroke-width="1"/><rect x="5.8" y="0.6" width="3.2" height="3.8" fill="#1f6fa6"/><rect x="7" y="1.4" width="0.8" height="2" fill="#cfe6f4"/></svg>
<div style="left:834.7px;top:121.5px;width:30.2px;height:7.8px;background:#b5e2f8;"></div>
<span style="left:835.40px;top:121.90px;font-size:5.9px;line-height:8px;color:#333;transform:scaleX(0.8893);transform-origin:0 50%;-webkit-text-stroke:0.08px;">Feature id 1</span>
<span style="left:835.40px;top:129.40px;font-size:5.9px;line-height:8px;color:#333;transform:scaleX(0.8893);transform-origin:0 50%;-webkit-text-stroke:0.08px;">Feature id 3</span>
<span style="left:835.40px;top:137.00px;font-size:5.9px;line-height:8px;color:#333;transform:scaleX(0.8893);transform-origin:0 50%;-webkit-text-stroke:0.08px;">Feature id 5</span>
<span style="left:835.40px;top:144.70px;font-size:5.9px;line-height:8px;color:#333;transform:scaleX(0.8893);transform-origin:0 50%;-webkit-text-stroke:0.08px;">Feature id 7</span>
<svg style="left:868px;top:114px" width="50" height="18" viewBox="868 114 50 18"><path d="M910.8 124.2 C904 124.3 898 124.2 893 125 C887 126.2 881 126.8 874.2 126 C876 123.6 878.4 121.4 880.8 119.4" fill="none" stroke="#e81c24" stroke-width="1.5" stroke-linecap="round" stroke-linejoin="round"/><path d="M874.2 126 C878 127 881 127.2 884.4 127" fill="none" stroke="#e81c24" stroke-width="1.4" stroke-linecap="round"/></svg>
<div style="left:812.5px;top:157.2px;width:186px;height:12.300000000000011px;background:#ebeced;border-radius:1.5px;"></div>
<svg style="left:817.05px;top:161.50px" width="3.3" height="4.0" viewBox="0 0 3.3 4.0"><polygon points="0,0 3.3,2.0 0,4.0" fill="#707070"/></svg>
<span style="left:823.00px;top:159.50px;font-size:6.2px;line-height:8px;color:#3a3a3a;transform:scaleX(0.9266);transform-origin:0 50%;-webkit-text-stroke:0.1px;">Feature</span>
<div style="left:812.5px;top:171.6px;width:186px;height:12.0px;background:#ebeced;border-radius:1.5px;"></div>
<svg style="left:817.05px;top:175.50px" width="3.3" height="4.0" viewBox="0 0 3.3 4.0"><polygon points="0,0 3.3,2.0 0,4.0" fill="#707070"/></svg>
<span style="left:823.00px;top:173.50px;font-size:6.2px;line-height:8px;color:#3a3a3a;transform:scaleX(0.9291);transform-origin:0 50%;-webkit-text-stroke:0.1px;">Miscellaneous</span>
<div style="left:812.5px;top:186px;width:186px;height:11.800000000000011px;background:#ebeced;border-radius:1.5px;"></div>
<svg style="left:817.05px;top:189.80px" width="3.3" height="4.0" viewBox="0 0 3.3 4.0"><polygon points="0,0 3.3,2.0 0,4.0" fill="#707070"/></svg>
<span style="left:823.00px;top:187.80px;font-size:6.2px;line-height:8px;color:#3a3a3a;transform:scaleX(0.9286);transform-origin:0 50%;-webkit-text-stroke:0.1px;">Information</span>
<div style="left:0px;top:0px;width:998px;height:1px;background:#f01818;"></div>
<div style="left:0px;top:0px;width:1.2px;height:640px;background:#f01818;"></div>
<div style="left:996.6px;top:0px;width:1.4px;height:640px;background:#f01818;"></div>
<div style="left:0px;top:638.6px;width:998px;height:1.4px;background:#d01a1a;"></div>
</div></body></html>
